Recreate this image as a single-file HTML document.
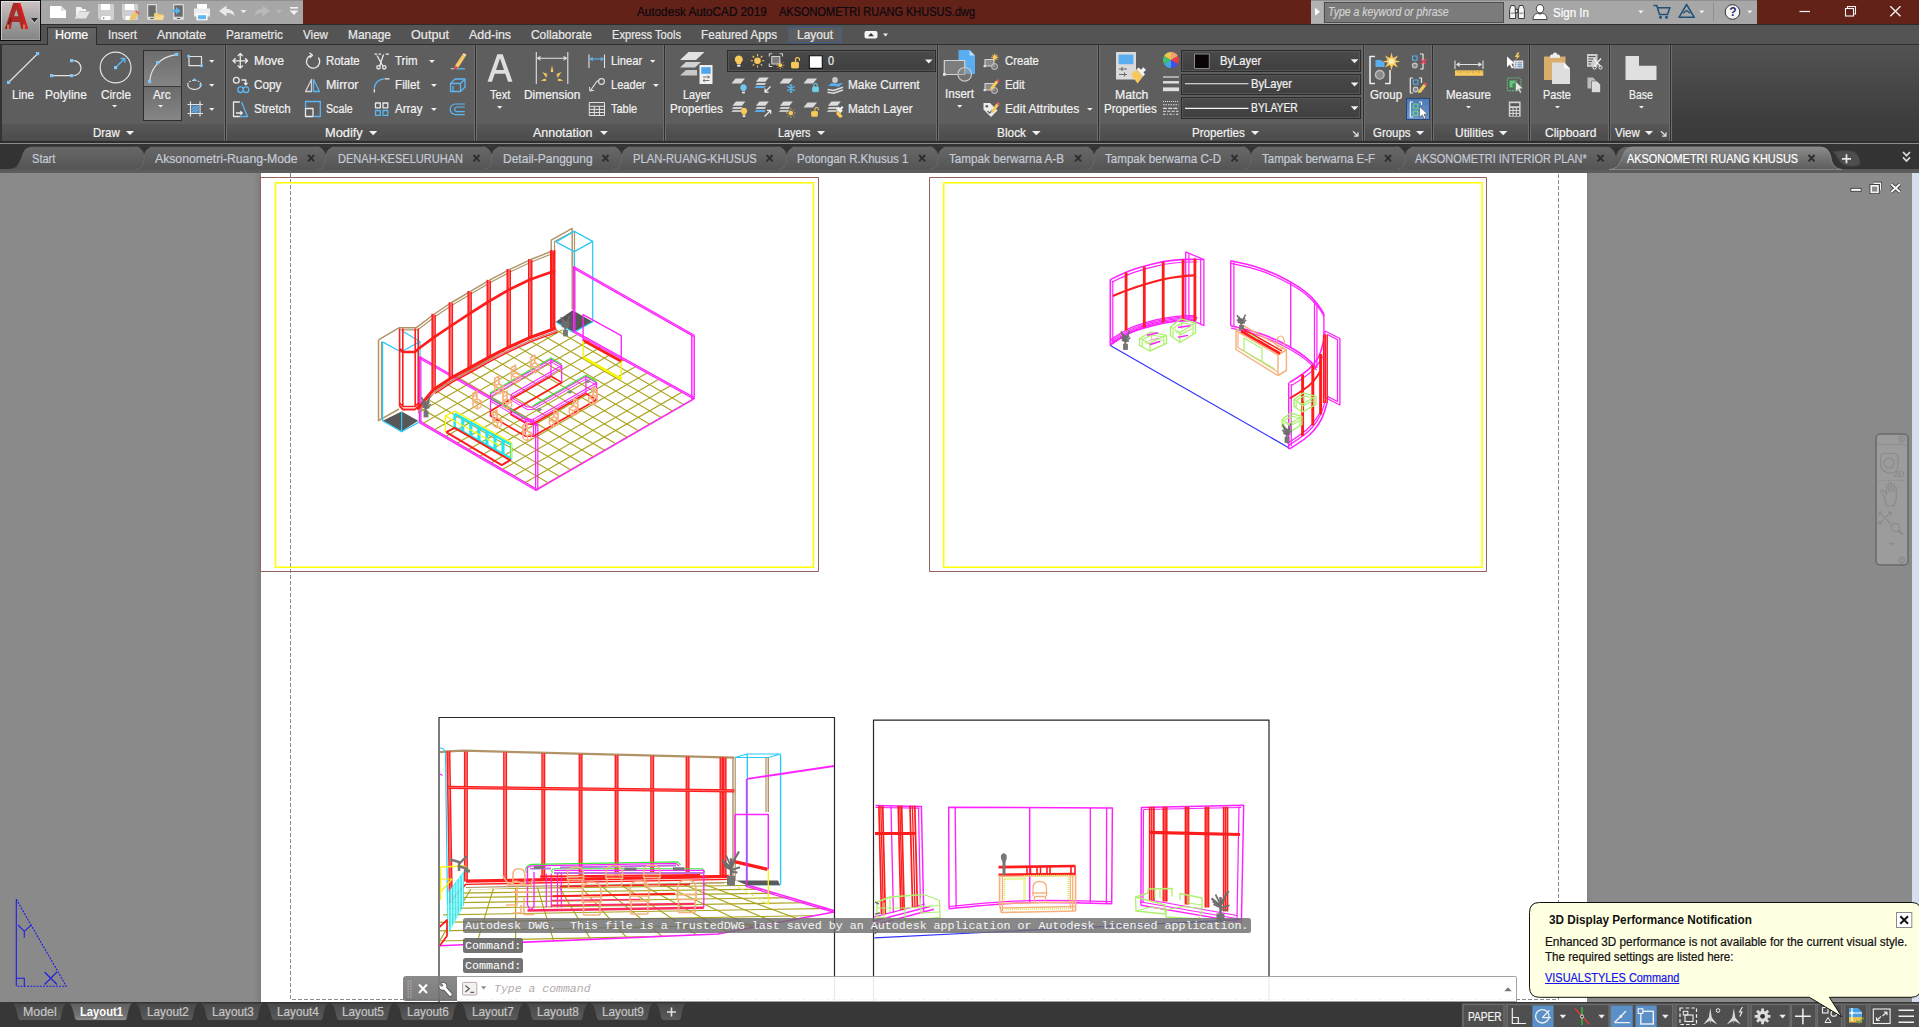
<!DOCTYPE html>
<html><head><meta charset="utf-8"><title>AutoCAD</title>
<style>
*{box-sizing:border-box;margin:0;padding:0}
html,body{width:1919px;height:1027px;overflow:hidden}
body{background:#8a8a8a;font-family:"Liberation Sans",sans-serif;font-size:12px;color:#f0f0f0;position:relative}
.a{position:absolute}
svg{position:absolute;overflow:visible}
.t{position:absolute;white-space:pre;-webkit-text-stroke:.22px currentColor;line-height:14px;font-size:12px;color:#f2f2f2;transform-origin:0 0}
.mt{position:absolute;white-space:nowrap;line-height:14px;font-size:12.5px;color:#e6e6e6;top:28px;transform-origin:0 0}
.pt{position:absolute;white-space:nowrap;line-height:14px;font-size:12.5px;color:#f2f2f2;top:126px;transform-origin:0 0}
.panel{position:absolute;top:46px;height:97px;background:#585858;border-left:1px solid #636363;border-right:1px solid #3e3e3e}
.ptitle{position:absolute;left:0;right:0;bottom:0;height:19px;background:linear-gradient(#4b4b4b,#454545)}
.dd{position:absolute;width:0;height:0;border-left:3.5px solid transparent;border-right:3.5px solid transparent;border-top:4px solid #f0f0f0}
.dds{position:absolute;width:0;height:0;border-left:3px solid transparent;border-right:3px solid transparent;border-top:3.5px solid #f0f0f0}
.ft{position:absolute;top:152px;white-space:nowrap;line-height:14px;font-size:12.5px;color:#c9c9c9;transform-origin:0 0}
.fx{position:absolute;top:152px;font-size:11px;line-height:14px;color:#2b2b2b;font-weight:bold}
.lt{position:absolute;top:1005px;white-space:nowrap;line-height:14px;font-size:12.5px;color:#c4c4c4;transform-origin:0 0}
.combo{position:absolute;background:linear-gradient(#4a4a4a,#3f3f3f);border:1px solid #2b2b2b;box-shadow:inset 0 0 0 1px #555}
.mono{font-family:"Liberation Mono",monospace}
</style></head><body>
<!-- TITLE BAR -->
<div class="a" style="left:0;top:0;width:1919px;height:24px;background:#622218"></div>
<div class="a" style="left:0;top:24px;width:1919px;height:1px;background:#2a2d2e"></div>
<!-- menu bar bg -->
<div class="a" style="left:0;top:25px;width:1919px;height:20px;background:#545454"></div>
<!-- ribbon bg -->
<div class="a" style="left:0;top:45px;width:1919px;height:100px;background:linear-gradient(#525252 0,#4a4a4a 30%,#3d3d3d 75%,#3a3a3a 100%)"></div>
<div class="a" style="left:0;top:44px;width:1919px;height:1px;background:#2f2f2f"></div>

<!-- QAT -->
<div class="a" style="left:41px;top:0;width:262px;height:24px;background:#a7a7a7;border-top:1px solid #8f8f8f"></div>
<!-- App button -->
<div class="a" style="left:0;top:0;width:41px;height:41px;background:linear-gradient(#c6c6c6 0,#c4baba 12%,#b8b2b2 25%,#a6a6a6 45%,#949494 70%,#858585 100%);border:1px solid #0e0e0e;box-shadow:inset 1px 1px 0 rgba(255,255,255,.5),inset -1px -1px 0 rgba(200,200,200,.35)"></div>
<svg style="left:0;top:0" width="41" height="41" viewBox="0 0 41 41">
 <path d="M4.9 29 L13.2 2.9 L20.2 2.9 L28.1 29 L21.3 29 L19.4 21.9 L12 21.9 L10.8 29 Z M14.1 16.3 L16.3 9.6 L18.4 16.3 Z" fill="#ab2c27" fill-rule="evenodd"/>
 <path d="M17.6 2.9 L20.2 2.9 L28.1 29 L26.2 29 L24.2 22 L19.2 7.5 Z" fill="#f2141c" opacity=".85"/>
 <path d="M5.6 28.5 L10.8 17.5 L11.8 18 L7.2 28.8 Z" fill="#5a1210" opacity=".8"/>
 <path d="M7 24.5 h2.2 v4.5 h-2.2 Z M23 24.5 h2.2 v4.5 h-2.2 Z" fill="#d98a5a" opacity=".8"/>
 <path d="M30.8 18 H38.1 L34.45 22.6 Z" fill="#2c2c2c"/><path d="M30.8 18.3 L34.45 23.2 L38.1 18.3" stroke="#e8e8e8" stroke-width=".7" fill="none" opacity=".7"/>
</svg>
<!-- QAT icons -->
<svg style="left:41px;top:0" width="262" height="24" viewBox="41 0 262 24">
 <!-- new -->
 <path d="M50 6 H61 L66 10.5 V18 H50 Z" fill="#fff"/><path d="M61 6 V10.5 H66 Z" fill="#d9d9d9"/>
 <!-- open -->
 <path d="M76 7 H81 L82.5 9 H86 V11 H79.5 L76 17 Z" fill="#f4f4f4"/><path d="M79 11.5 H90 L86 18.5 H74.5 Z" fill="#e4e4e0"/>
 <!-- save -->
 <path d="M98 4 H114 V20 H100 L98 18 Z" fill="#cfcfcf"/><rect x="101" y="4" width="9" height="6" fill="#fff"/><rect x="101.5" y="16" width="9" height="4" fill="#fff"/><rect x="103" y="17" width="1.3" height="2.2" fill="#9a9a9a"/>
 <!-- save as -->
 <path d="M122 4 H138 V20 H124 L122 18 Z" fill="#cfcfcf"/><rect x="125" y="4" width="9" height="6" fill="#fff"/><rect x="125.5" y="16" width="6" height="4" fill="#fff"/>
 <path d="M130 17 L135 11.5 L138.5 14.5 L133.5 20 L129.5 20.5 Z" fill="#e9c46a"/><path d="M135 11.5 L136.2 10.3 L139.7 13.3 L138.5 14.5 Z" fill="#ee5a5a"/>
 <!-- open from mobile -->
 <rect x="147" y="4" width="10" height="16" rx="1.2" fill="#d8d8d8"/><rect x="148.3" y="5.3" width="7.4" height="11.4" fill="#6b6b6b"/><rect x="150.5" y="18" width="3" height="1" fill="#555"/>
 <path d="M154 13 H158 L159 14.2 H163 V20 H154 Z" fill="#f0c870"/><path d="M155.5 15.5 H164.5 L163 20 H154 Z" fill="#f6d995"/>
 <!-- save to mobile -->
 <rect x="173" y="4" width="11" height="16" rx="1.2" fill="#d8d8d8"/><rect x="174.3" y="5.3" width="8.4" height="11.4" fill="#6b6b6b"/><rect x="177" y="18" width="3" height="1" fill="#555"/>
 <path d="M171.5 9.7 H176 V7 L180.5 10.8 L176 14.6 V11.9 H171.5 Z" fill="#5ab4f0"/>
 <!-- print -->
 <rect x="197" y="4" width="10" height="5" fill="#fff"/><path d="M194 8.5 H210 V16.5 H194 Z" fill="#ececec"/><rect x="196.5" y="14" width="11" height="6.3" fill="#fff"/><rect x="198" y="15.2" width="8" height="4" fill="#62b6f2"/><rect x="196" y="13.5" width="12" height="1.3" fill="#fff"/>
 <!-- undo -->
 <path d="M219 11 L226.5 5.5 V9 C231 9 234 11 234.5 16 C232.5 13.5 230 13 226.5 13 V16.5 Z" fill="#e9e9e9"/>
 <path d="M240.5 10 H246.5 L243.5 13.2 Z" fill="#e9e9e9"/>
 <!-- redo -->
 <path d="M270 11 L262.5 5.5 V9 C258 9 255 11 254.5 16 C256.5 13.5 259 13 262.5 13 V16.5 Z" fill="#b9b9b9"/>
 <path d="M276 10 H282 L279 13.2 Z" fill="#b9b9b9"/>
 <!-- customize -->
 <rect x="290" y="7" width="8" height="1.6" fill="#f2f2f2"/><path d="M289.6 10.5 H298.4 L294 15 Z" fill="#f2f2f2"/>
</svg>
<!-- title text -->
<div class="t" style="left:637.0px;top:4.4px;font-size:12.8px;line-height:15px;color:#0c0810;transform:scaleX(0.916);">Autodesk AutoCAD 2019</div>
<div class="t" style="left:779.3px;top:4.4px;font-size:12.8px;line-height:15px;color:#0c0810;transform:scaleX(0.859);">AKSONOMETRI RUANG KHUSUS.dwg</div>
<div class="a" style="left:0;top:45px;width:1671px;height:97px;background:#5e5e5e;border-left:2px solid #333"></div>
<div class="a" style="left:2px;top:124px;width:1669px;height:17.5px;background:linear-gradient(#575757,#4a4a4a)"></div>
<div class="a" style="left:2px;top:137.5px;width:1669px;height:1px;background:repeating-linear-gradient(90deg,#555 0,#555 1px,#4c4c4c 1px,#4c4c4c 2px)"></div>
<div class="a" style="left:224px;top:45px;width:3px;height:96.5px;background:linear-gradient(90deg,#6c6c6c 0,#6c6c6c 1px,#2f2f2f 1px,#2f2f2f 2px,#6c6c6c 2px)"></div>
<div class="a" style="left:474px;top:45px;width:3px;height:96.5px;background:linear-gradient(90deg,#6c6c6c 0,#6c6c6c 1px,#2f2f2f 1px,#2f2f2f 2px,#6c6c6c 2px)"></div>
<div class="a" style="left:663px;top:45px;width:3px;height:96.5px;background:linear-gradient(90deg,#6c6c6c 0,#6c6c6c 1px,#2f2f2f 1px,#2f2f2f 2px,#6c6c6c 2px)"></div>
<div class="a" style="left:936px;top:45px;width:3px;height:96.5px;background:linear-gradient(90deg,#6c6c6c 0,#6c6c6c 1px,#2f2f2f 1px,#2f2f2f 2px,#6c6c6c 2px)"></div>
<div class="a" style="left:1097px;top:45px;width:3px;height:96.5px;background:linear-gradient(90deg,#6c6c6c 0,#6c6c6c 1px,#2f2f2f 1px,#2f2f2f 2px,#6c6c6c 2px)"></div>
<div class="a" style="left:1362px;top:45px;width:3px;height:96.5px;background:linear-gradient(90deg,#6c6c6c 0,#6c6c6c 1px,#2f2f2f 1px,#2f2f2f 2px,#6c6c6c 2px)"></div>
<div class="a" style="left:1431px;top:45px;width:3px;height:96.5px;background:linear-gradient(90deg,#6c6c6c 0,#6c6c6c 1px,#2f2f2f 1px,#2f2f2f 2px,#6c6c6c 2px)"></div>
<div class="a" style="left:1528px;top:45px;width:3px;height:96.5px;background:linear-gradient(90deg,#6c6c6c 0,#6c6c6c 1px,#2f2f2f 1px,#2f2f2f 2px,#6c6c6c 2px)"></div>
<div class="a" style="left:1608px;top:45px;width:3px;height:96.5px;background:linear-gradient(90deg,#6c6c6c 0,#6c6c6c 1px,#2f2f2f 1px,#2f2f2f 2px,#6c6c6c 2px)"></div>
<div class="a" style="left:1669px;top:45px;width:3px;height:96.5px;background:linear-gradient(90deg,#6c6c6c 0,#6c6c6c 1px,#2f2f2f 1px,#2f2f2f 2px,#6c6c6c 2px)"></div>
<div class="a" style="left:0;top:141.3px;width:1919px;height:1.7px;background:#2d2d2d"></div>
<div class="a" style="left:0;top:143px;width:1919px;height:1.3px;background:#8c8c8c"></div>
<!-- Arc button highlight -->
<div class="a" style="left:142.5px;top:49.5px;width:39.5px;height:71px;background:linear-gradient(#6d6d6d 0,#848484 50%,#6b6b6b 52%,#868686 100%);border:1px solid #2e2e2e"></div>
<div class="a" style="left:143px;top:86px;width:38.5px;height:1px;background:#3a3a3a"></div>
<!-- combos -->
<div class="combo" style="left:727px;top:50px;width:208.5px;height:22px"></div>
<div class="combo" style="left:1181px;top:50px;width:179.5px;height:21.5px"></div>
<div class="combo" style="left:1181px;top:73.7px;width:179.5px;height:21.3px"></div>
<div class="combo" style="left:1181px;top:97.3px;width:179.5px;height:21.5px"></div>
<!-- group select highlight -->
<div class="a" style="left:1406.3px;top:98.3px;width:23.4px;height:21.4px;background:linear-gradient(#4f79b4,#6a95cf);border:1px solid #27477a"></div>
<div class="a" style="left:47px;top:27px;width:50px;height:18px;background:linear-gradient(#636363,#5e5e5e);border:1px solid #2d2d2d;border-bottom:none"></div>
<div class="a" style="left:48px;top:43.5px;width:48px;height:2.5px;background:#5e5e5e"></div>
<div class="a" style="left:788px;top:27px;width:54px;height:16px;background:#5d5d5d;border:1px solid #3b5f8a"></div>
<div class="t" style="left:55.0px;top:26.7px;font-size:13px;line-height:15px;color:#ffffff;transform:scaleX(0.960);">Home</div>
<div class="t" style="left:108.0px;top:26.7px;font-size:13px;line-height:15px;color:#e8e8e8;transform:scaleX(0.892);">Insert</div>
<div class="t" style="left:157.0px;top:26.7px;font-size:13px;line-height:15px;color:#e8e8e8;transform:scaleX(0.941);">Annotate</div>
<div class="t" style="left:226.0px;top:26.7px;font-size:13px;line-height:15px;color:#e8e8e8;transform:scaleX(0.907);">Parametric</div>
<div class="t" style="left:303.0px;top:26.7px;font-size:13px;line-height:15px;color:#e8e8e8;transform:scaleX(0.895);">View</div>
<div class="t" style="left:348.0px;top:26.7px;font-size:13px;line-height:15px;color:#e8e8e8;transform:scaleX(0.915);">Manage</div>
<div class="t" style="left:411.0px;top:26.7px;font-size:13px;line-height:15px;color:#e8e8e8;transform:scaleX(0.974);">Output</div>
<div class="t" style="left:469.0px;top:26.7px;font-size:13px;line-height:15px;color:#e8e8e8;transform:scaleX(0.953);">Add-ins</div>
<div class="t" style="left:531.0px;top:26.7px;font-size:13px;line-height:15px;color:#e8e8e8;transform:scaleX(0.917);">Collaborate</div>
<div class="t" style="left:612.0px;top:26.7px;font-size:13px;line-height:15px;color:#e8e8e8;transform:scaleX(0.855);">Express Tools</div>
<div class="t" style="left:701.0px;top:26.7px;font-size:13px;line-height:15px;color:#e8e8e8;transform:scaleX(0.899);">Featured Apps</div>
<div class="t" style="left:797.0px;top:26.7px;font-size:13px;line-height:15px;color:#e8e8e8;transform:scaleX(0.922);">Layout</div>
<svg style="left:864px;top:29px" width="26" height="12" viewBox="864 29 26 12"><rect x="864.5" y="31" width="13" height="7.5" rx="2" fill="#f4f4f4"/><path d="M868 36.3 L871 33 L874 36.3 Z" fill="#333"/><path d="M883 33.5 H888 L885.5 36.5 Z" fill="#f0f0f0"/></svg>
<div class="t" style="left:93.3px;top:124.5px;font-size:13px;line-height:15px;color:#f2f2f2;transform:scaleX(0.883);">Draw</div>
<svg style="left:125.95px;top:131.0px" width="8.10" height="4.05" viewBox="0 0 8.10 4.05"><path d="M0 0 H8.10 L4.05 4.05 Z" fill="#f0f0f0"/></svg>
<div class="t" style="left:325.3px;top:124.5px;font-size:13px;line-height:15px;color:#f2f2f2;transform:scaleX(0.985);">Modify</div>
<svg style="left:368.84px;top:131.0px" width="8.32" height="4.16" viewBox="0 0 8.32 4.16"><path d="M0 0 H8.32 L4.16 4.16 Z" fill="#f0f0f0"/></svg>
<div class="t" style="left:533.3px;top:124.5px;font-size:13px;line-height:15px;color:#f2f2f2;transform:scaleX(0.957);">Annotation</div>
<svg style="left:599.56px;top:131.0px" width="7.88" height="3.94" viewBox="0 0 7.88 3.94"><path d="M0 0 H7.88 L3.94 3.94 Z" fill="#f0f0f0"/></svg>
<div class="t" style="left:778.3px;top:124.5px;font-size:13px;line-height:15px;color:#f2f2f2;transform:scaleX(0.833);">Layers</div>
<svg style="left:816.95px;top:131.0px" width="8.10" height="4.05" viewBox="0 0 8.10 4.05"><path d="M0 0 H8.10 L4.05 4.05 Z" fill="#f0f0f0"/></svg>
<div class="t" style="left:997.2px;top:124.5px;font-size:13px;line-height:15px;color:#f2f2f2;transform:scaleX(0.912);">Block</div>
<svg style="left:1031.68px;top:131.0px" width="8.64" height="4.32" viewBox="0 0 8.64 4.32"><path d="M0 0 H8.64 L4.32 4.32 Z" fill="#f0f0f0"/></svg>
<div class="t" style="left:1192.2px;top:124.5px;font-size:13px;line-height:15px;color:#f2f2f2;transform:scaleX(0.891);">Properties</div>
<svg style="left:1250.95px;top:131.0px" width="8.10" height="4.05" viewBox="0 0 8.10 4.05"><path d="M0 0 H8.10 L4.05 4.05 Z" fill="#f0f0f0"/></svg>
<div class="t" style="left:1372.5px;top:124.5px;font-size:13px;line-height:15px;color:#f2f2f2;transform:scaleX(0.880);">Groups</div>
<svg style="left:1415.90px;top:131.0px" width="8.21" height="4.10" viewBox="0 0 8.21 4.10"><path d="M0 0 H8.21 L4.10 4.10 Z" fill="#f0f0f0"/></svg>
<div class="t" style="left:1454.5px;top:124.5px;font-size:13px;line-height:15px;color:#f2f2f2;transform:scaleX(0.919);">Utilities</div>
<svg style="left:1498.79px;top:131.0px" width="8.42" height="4.21" viewBox="0 0 8.42 4.21"><path d="M0 0 H8.42 L4.21 4.21 Z" fill="#f0f0f0"/></svg>
<div class="t" style="left:1544.5px;top:124.5px;font-size:13px;line-height:15px;color:#f2f2f2;transform:scaleX(0.922);">Clipboard</div>
<div class="t" style="left:1615.0px;top:124.5px;font-size:13px;line-height:15px;color:#f2f2f2;transform:scaleX(0.884);">View</div>
<svg style="left:1645.45px;top:131.0px" width="8.10" height="4.05" viewBox="0 0 8.10 4.05"><path d="M0 0 H8.10 L4.05 4.05 Z" fill="#f0f0f0"/></svg>
<div class="t" style="left:12.2px;top:86.8px;font-size:13px;line-height:15px;color:#f2f2f2;transform:scaleX(0.899);">Line</div>
<div class="t" style="left:45.2px;top:86.8px;font-size:13px;line-height:15px;color:#f2f2f2;transform:scaleX(0.920);">Polyline</div>
<div class="t" style="left:101.3px;top:86.8px;font-size:13px;line-height:15px;color:#f2f2f2;transform:scaleX(0.900);">Circle</div>
<div class="t" style="left:153.3px;top:86.8px;font-size:13px;line-height:15px;color:#f2f2f2;transform:scaleX(0.903);">Arc</div>
<div class="t" style="left:254.2px;top:53.0px;font-size:13px;line-height:15px;color:#f2f2f2;transform:scaleX(0.944);">Move</div>
<div class="t" style="left:254.2px;top:77.0px;font-size:13px;line-height:15px;color:#f2f2f2;transform:scaleX(0.906);">Copy</div>
<div class="t" style="left:254.2px;top:101.0px;font-size:13px;line-height:15px;color:#f2f2f2;transform:scaleX(0.889);">Stretch</div>
<div class="t" style="left:326.3px;top:53.0px;font-size:13px;line-height:15px;color:#f2f2f2;transform:scaleX(0.880);">Rotate</div>
<div class="t" style="left:326.3px;top:77.0px;font-size:13px;line-height:15px;color:#f2f2f2;transform:scaleX(0.958);">Mirror</div>
<div class="t" style="left:326.3px;top:101.0px;font-size:13px;line-height:15px;color:#f2f2f2;transform:scaleX(0.821);">Scale</div>
<div class="t" style="left:395.0px;top:53.0px;font-size:13px;line-height:15px;color:#f2f2f2;transform:scaleX(0.882);">Trim</div>
<div class="t" style="left:395.0px;top:77.0px;font-size:13px;line-height:15px;color:#f2f2f2;transform:scaleX(0.900);">Fillet</div>
<div class="t" style="left:395.0px;top:101.0px;font-size:13px;line-height:15px;color:#f2f2f2;transform:scaleX(0.885);">Array</div>
<div class="t" style="left:489.7px;top:86.8px;font-size:13px;line-height:15px;color:#f2f2f2;transform:scaleX(0.851);">Text</div>
<div class="t" style="left:524.2px;top:86.8px;font-size:13px;line-height:15px;color:#f2f2f2;transform:scaleX(0.917);">Dimension</div>
<div class="t" style="left:610.5px;top:53.0px;font-size:13px;line-height:15px;color:#f2f2f2;transform:scaleX(0.863);">Linear</div>
<div class="t" style="left:610.5px;top:77.0px;font-size:13px;line-height:15px;color:#f2f2f2;transform:scaleX(0.852);">Leader</div>
<div class="t" style="left:610.5px;top:101.0px;font-size:13px;line-height:15px;color:#f2f2f2;transform:scaleX(0.843);">Table</div>
<div class="t" style="left:683.3px;top:86.8px;font-size:13px;line-height:15px;color:#f2f2f2;transform:scaleX(0.846);">Layer</div>
<div class="t" style="left:670.3px;top:101.3px;font-size:13px;line-height:15px;color:#f2f2f2;transform:scaleX(0.889);">Properties</div>
<div class="t" style="left:848.3px;top:77.0px;font-size:13px;line-height:15px;color:#f2f2f2;transform:scaleX(0.910);">Make Current</div>
<div class="t" style="left:848.3px;top:101.0px;font-size:13px;line-height:15px;color:#f2f2f2;transform:scaleX(0.904);">Match Layer</div>
<div class="t" style="left:945.3px;top:86.0px;font-size:13px;line-height:15px;color:#f2f2f2;transform:scaleX(0.889);">Insert</div>
<div class="t" style="left:1004.5px;top:53.0px;font-size:13px;line-height:15px;color:#f2f2f2;transform:scaleX(0.866);">Create</div>
<div class="t" style="left:1004.5px;top:77.0px;font-size:13px;line-height:15px;color:#f2f2f2;transform:scaleX(0.879);">Edit</div>
<div class="t" style="left:1004.5px;top:101.0px;font-size:13px;line-height:15px;color:#f2f2f2;transform:scaleX(0.926);">Edit Attributes</div>
<div class="t" style="left:1114.5px;top:86.8px;font-size:13px;line-height:15px;color:#f2f2f2;transform:scaleX(0.941);">Match</div>
<div class="t" style="left:1104.2px;top:101.3px;font-size:13px;line-height:15px;color:#f2f2f2;transform:scaleX(0.891);">Properties</div>
<div class="t" style="left:1369.5px;top:86.8px;font-size:13px;line-height:15px;color:#f2f2f2;transform:scaleX(0.891);">Group</div>
<div class="t" style="left:1446.3px;top:86.8px;font-size:13px;line-height:15px;color:#f2f2f2;transform:scaleX(0.888);">Measure</div>
<div class="t" style="left:1543.3px;top:86.8px;font-size:13px;line-height:15px;color:#f2f2f2;transform:scaleX(0.839);">Paste</div>
<div class="t" style="left:1629.2px;top:86.8px;font-size:13px;line-height:15px;color:#f2f2f2;transform:scaleX(0.803);">Base</div>
<div class="t" style="left:828.0px;top:52.7px;font-size:13px;line-height:15px;color:#f2f2f2;transform:scaleX(0.830);">0</div>
<div class="t" style="left:1220.0px;top:53.0px;font-size:13px;line-height:15px;color:#f2f2f2;transform:scaleX(0.864);">ByLayer</div>
<div class="t" style="left:1251.2px;top:76.3px;font-size:13px;line-height:15px;color:#f2f2f2;transform:scaleX(0.860);">ByLayer</div>
<div class="t" style="left:1251.2px;top:100.0px;font-size:13px;line-height:15px;color:#f2f2f2;transform:scaleX(0.793);">BYLAYER</div>
<svg style="left:428.58px;top:60.0px" width="5.83" height="2.92" viewBox="0 0 5.83 2.92"><path d="M0 0 H5.83 L2.92 2.92 Z" fill="#f0f0f0"/></svg>
<svg style="left:430.58px;top:84.0px" width="5.83" height="2.92" viewBox="0 0 5.83 2.92"><path d="M0 0 H5.83 L2.92 2.92 Z" fill="#f0f0f0"/></svg>
<svg style="left:430.58px;top:108.0px" width="5.83" height="2.92" viewBox="0 0 5.83 2.92"><path d="M0 0 H5.83 L2.92 2.92 Z" fill="#f0f0f0"/></svg>
<svg style="left:649.80px;top:60.0px" width="5.40" height="2.70" viewBox="0 0 5.40 2.70"><path d="M0 0 H5.40 L2.70 2.70 Z" fill="#f0f0f0"/></svg>
<svg style="left:652.53px;top:84.0px" width="5.94" height="2.97" viewBox="0 0 5.94 2.97"><path d="M0 0 H5.94 L2.97 2.97 Z" fill="#f0f0f0"/></svg>
<svg style="left:1086.64px;top:108.0px" width="5.72" height="2.86" viewBox="0 0 5.72 2.86"><path d="M0 0 H5.72 L2.86 2.86 Z" fill="#f0f0f0"/></svg>
<svg style="left:496.80px;top:105.5px" width="5.40" height="2.70" viewBox="0 0 5.40 2.70"><path d="M0 0 H5.40 L2.70 2.70 Z" fill="#f0f0f0"/></svg>
<svg style="left:956.80px;top:104.5px" width="5.40" height="2.70" viewBox="0 0 5.40 2.70"><path d="M0 0 H5.40 L2.70 2.70 Z" fill="#f0f0f0"/></svg>
<svg style="left:1466.02px;top:105.5px" width="4.97" height="2.48" viewBox="0 0 4.97 2.48"><path d="M0 0 H4.97 L2.48 2.48 Z" fill="#f0f0f0"/></svg>
<svg style="left:1555.02px;top:105.5px" width="4.97" height="2.48" viewBox="0 0 4.97 2.48"><path d="M0 0 H4.97 L2.48 2.48 Z" fill="#f0f0f0"/></svg>
<svg style="left:1638.52px;top:105.5px" width="4.97" height="2.48" viewBox="0 0 4.97 2.48"><path d="M0 0 H4.97 L2.48 2.48 Z" fill="#f0f0f0"/></svg>
<svg style="left:112.41px;top:105.0px" width="5.18" height="2.59" viewBox="0 0 5.18 2.59"><path d="M0 0 H5.18 L2.59 2.59 Z" fill="#f0f0f0"/></svg>
<svg style="left:158.41px;top:105.0px" width="5.18" height="2.59" viewBox="0 0 5.18 2.59"><path d="M0 0 H5.18 L2.59 2.59 Z" fill="#f0f0f0"/></svg>
<svg style="left:209.30px;top:60.0px" width="5.40" height="2.70" viewBox="0 0 5.40 2.70"><path d="M0 0 H5.40 L2.70 2.70 Z" fill="#f0f0f0"/></svg>
<svg style="left:209.30px;top:84.0px" width="5.40" height="2.70" viewBox="0 0 5.40 2.70"><path d="M0 0 H5.40 L2.70 2.70 Z" fill="#f0f0f0"/></svg>
<svg style="left:209.30px;top:108.0px" width="5.40" height="2.70" viewBox="0 0 5.40 2.70"><path d="M0 0 H5.40 L2.70 2.70 Z" fill="#f0f0f0"/></svg>
<svg style="left:0;top:45px" width="1919" height="100" viewBox="0 45 1919 100" fill="none" stroke-linejoin="round">
<!-- ===== DRAW ===== -->
<g stroke="#e2e2e2" stroke-width="1.2">
 <path d="M9 82 L37.3 54"/>
 <path d="M53 75.6 H71 M73.5 75.6 A7.5 7.5 0 0 0 73.5 60.6"/>
 <circle cx="115.6" cy="67.5" r="15.4"/>
 <path d="M149.8 80.5 C151 68 160 57 175 54.8"/>
 <rect x="189" y="56.5" width="12.5" height="9.2"/>
 <path d="M187.8 84.2 A6.6 4.6 0 0 0 200.9 85.4"/>
 <path d="M187.5 104.5 H203 M187.5 113.5 H203 M190.5 101.5 V116.5 M200 101.5 V116.5"/>
</g>
<g fill="#7cc6fc">
 <rect x="7" y="80.8" width="3.2" height="3.2"/><rect x="36" y="52" width="3.2" height="3.2"/>
 <rect x="50" y="74" width="3.2" height="3.2"/><rect x="70" y="74" width="3.2" height="3.2"/><rect x="70" y="59" width="3.2" height="3.2"/>
 <rect x="114" y="66" width="3.2" height="3.2"/>
 <rect x="148" y="80" width="3.2" height="3.2"/><rect x="156" y="61" width="3.2" height="3.2"/><rect x="175" y="52.8" width="3.2" height="3.2"/>
 <rect x="187.2" y="54.8" width="2.6" height="2.6"/><rect x="200.2" y="64.5" width="2.6" height="2.6"/>
 <rect x="193.2" y="78.7" width="2.4" height="2.4"/><rect x="199.5" y="83.8" width="2.4" height="2.4"/>
 <rect x="191.2" y="105.2" width="8.2" height="7.7" fill="#4a86b8"/>
</g>
<path d="M117 66 L124 59.2 M120.5 58.5 H124.8 V62.8" stroke="#5cb6f4" stroke-width="1.4"/>
<path d="M187.8 84.2 A6.6 4.6 0 0 1 200.9 85.4" stroke="#e2e2e2" stroke-width="1.1" stroke-dasharray="1.6 1.3"/>
<path d="M192 112.5 L198.5 106 M192 109.5 L195.5 106 M195 112.5 L198.8 108.8" stroke="#9fd2f8" stroke-width=".8"/>
<!-- ===== MODIFY ===== -->
<g stroke="#eaeaea" stroke-width="1.3">
 <path d="M233 60.8 H247.6 M240.3 53.5 V68.1 M235.6 58.2 L233 60.8 L235.6 63.4 M245 58.2 L247.6 60.8 L245 63.4 M237.7 56.1 L240.3 53.5 L242.9 56.1 M237.7 65.5 L240.3 68.1 L242.9 65.5"/>
 <circle cx="236.3" cy="80.3" r="2.9"/><path d="M241.5 80 H245.8 V84.5 M244.2 83 L245.8 84.8 L247.4 83"/>
 <path d="M239.8 102 H233.5 V116.5 H239.8 M236 113 H242 M240.3 111.3 L242.3 113 L240.3 114.7"/>
 <path d="M318.3 57.5 A6.6 6.6 0 1 1 311 55.3 M309.5 52.8 L312.5 55.2 L309.8 57.8"/>
 <path d="M311.5 79.5 V91.5 H305.5 Z" stroke="#d8d0d0"/>
 <rect x="305.5" y="108.5" width="7.5" height="8"/>
 <path d="M374.5 54.2 H377 M378.5 54.2 H381 M385.5 54.2 H389"/>
 <path d="M377 55.5 L382.8 66 M383.5 54.5 L379.7 66"/><circle cx="384.3" cy="67.3" r="1.7"/><circle cx="378.5" cy="67.3" r="1.7"/>
 <path d="M384.8 78.8 H389.5 M374.3 89 V92.5"/>
 <rect x="375.5" y="103" width="4.8" height="4.8"/><rect x="383" y="103" width="4.8" height="4.8"/>
</g>
<g stroke="#5cb6f4" stroke-width="1.3">
 <circle cx="240.6" cy="89.7" r="2.8"/><circle cx="246" cy="89.7" r="2.8"/>
 <path d="M241.5 102 L247.5 116.5 H240"/>
 <path d="M313.5 79.5 V91.5 H319.5 Z"/>
 <path d="M305.5 108 V101.5 H320.3 V116.5 H313.5"/>
 <path d="M374.3 88.5 C374.5 83 378.5 79 384.5 78.8"/>
 <rect x="375.5" y="110.5" width="4.8" height="4.8"/><rect x="383" y="110.5" width="4.8" height="4.8"/>
 <path d="M450.5 83.5 H460.5 V91.5 H450.5 Z M450.5 83.5 L455 79 H465 V87 L460.5 91.5 M460.5 83.5 L465 79 M453 86 V91.5"/>
 <path d="M464.8 104 H455.5 A5.3 5.3 0 0 0 455.5 114.6 H464.8 M464.8 107 H456.5 A2.4 2.4 0 0 0 456.5 111.7 H464.8" stroke-width="1.2"/>
 <path d="M456.5 68.8 H465"/>
</g>
<path d="M455 65.8 L462.2 54.8 L465.3 56.8 L458.2 67.8 Z" fill="#f6c86a"/><path d="M455 65.8 L458.2 67.8 L456.5 68.9 L453 68.5 Z" fill="#f05050"/><path d="M462.2 54.8 L463.8 53 L466.5 54.8 L465.3 56.8Z" fill="#f9dc9a"/>
<path d="M450.8 68.8 H454" stroke="#ddd" stroke-width="1"/>
<!-- ===== ANNOTATION ===== -->
<path d="M487.5 81.7 L497.3 54.2 H502.7 L512.5 81.7 H508 L505.3 73.7 H494.7 L492 81.7 Z M496 70 H504 L500 58.3 Z" fill="#dedede" fill-rule="evenodd"/>
<g stroke="#e2e2e2" stroke-width="1.1">
 <path d="M536.3 52 V84 M567.8 52 V84 M538 58.3 H566 M540.5 56.5 L537.5 58.3 L540.5 60.1 M563.5 56.5 L566.5 58.3 L563.5 60.1"/>
 <path d="M589 54.5 V68 M604.5 54.5 V68"/>
 <path d="M590.5 90.5 L596 82.5 Q597 81 598.5 80.5 M589.5 87 L590 91 L594 90.3"/><circle cx="601.5" cy="81.5" r="2.9"/>
 <path d="M589.3 102.5 H604.5 V115.5 H589.3 Z M589.3 106.3 H604.5 M589.3 109.4 H604.5 M589.3 112.5 H604.5 M594.3 106.3 V115.5 M599.4 106.3 V115.5" stroke-width="1"/>
</g>
<path d="M590.5 59 H603 M592.8 57.5 L590.3 59 L592.8 60.5 M600.7 57.5 L603.2 59 L600.7 60.5" stroke="#5cb6f4" stroke-width="1.2"/>
<g fill="#f6cb5e"><path d="M551.3 68.5 L552 62.5 L552.8 68.5 Z" transform="translate(0,3)"/><path d="M545 74.5 L541.5 71 L547 73Z" transform="translate(.5,1)"/><path d="M558.5 74.5 L562.5 71 L556.7 73Z" transform="translate(-.5,1)"/><path d="M541 80 L545.5 78.3 L545.8 80.3Z" transform="translate(0,.3)"/><path d="M563 80 L558.5 78.3 L558.2 80.3Z" transform="translate(0,.3)"/>
 <path d="M550.6 72 L552 66 L553.4 72Z"/><path d="M543.3 73.2 L547.5 76 L546 77.5Z"/><path d="M560.7 73.2 L556.5 76 L558 77.5Z"/><path d="M540.3 80.8 L546 79 L546.3 81Z"/><path d="M563.7 80.8 L558 79 L557.7 81Z"/></g>
</svg>
<svg style="left:0;top:45px" width="1919" height="100" viewBox="0 45 1919 100" fill="none" stroke-linejoin="round">
<defs>
 <g id="sheet"><path d="M0 5 L4 0 H13.5 L9.5 5 Z" fill="#d9d9d9"/></g>
 <g id="sheets3"><path d="M0 4.2 L3.4 0 H12.8 L9.4 4.2 Z" fill="#dcdcdc"/><path d="M-.6 7.4 L1 5.4 H10.2 L8.6 7.4 Z" fill="#cfcfcf"/><path d="M-1.2 10.4 L.4 8.5 H9.6 L8 10.4 Z" fill="#c4c4c4"/></g>
 <g id="bulb"><path d="M0 -4.6 a4 4 0 0 1 2.2 7.3 v1.2 h-4.4 v-1.2 a4 4 0 0 1 2.2 -7.3Z"/><rect x="-1.6" y="4.6" width="3.2" height="2" fill="#f2f2f2"/></g>
 <g id="sun"><circle r="3.3"/><path d="M0 -6.8 V-4.6 M0 6.8 V4.6 M-6.8 0 H-4.6 M6.8 0 H4.6 M-4.8 -4.8 L-3.3 -3.3 M4.8 4.8 L3.3 3.3 M-4.8 4.8 L-3.3 3.3 M4.8 -4.8 L3.3 -3.3" stroke="#f7c95c" stroke-width="1.1"/></g>
 <g id="lock"><rect x="-3.4" y="0" width="6.8" height="5.6" rx=".6"/><path d="M-2 0 V-2.2 A2 2 0 0 1 2 -2.2 V0" fill="none" stroke-width="1.2"/></g>
 <g id="ulock"><rect x="-3.4" y="0" width="6.8" height="5.6" rx=".6"/><path d="M.5 0 V-2.6 A2 2 0 0 1 4.5 -2.6 V-1.5" fill="none" stroke-width="1.2"/></g>
</defs>
<!-- ===== LAYERS ===== -->
<g transform="translate(683,52)"><path d="M-3 8 L5.5 0 H21.5 L13 8 Z" fill="#e2e2e2"/><path d="M-3 15.5 L3 10 H18 L12 15.5 Z" fill="#d2d2d2"/><path d="M-3 23.5 L3 18 H14 V23.5 Z" fill="#c8c8c8"/>
 <rect x="16.5" y="13" width="13" height="19" fill="#f0f0f0"/><rect x="18.3" y="15.2" width="9.4" height="6.6" fill="#4fa6ec"/><path d="M20 25 H26.5 M24.8 23.6 L26.5 25 L24.8 26.4 M26.5 28.5 H20 M21.7 27.1 L20 28.5 L21.7 29.9" stroke="#666" stroke-width=".9"/></g>
<!-- combo contents -->
<g transform="translate(738.8,60)" fill="#f7c95c"><use href="#bulb"/></g>
<g transform="translate(757.5,60.8)" fill="#f7c95c"><use href="#sun"/></g>
<g stroke="#d0d0d0" stroke-width="1.1"><path d="M769.3 56.5 V53.8 H772.3 M779.5 53.8 H782.5 V56.5 M769.3 63.5 V66.5 H772.3"/><rect x="771.8" y="56.5" width="8" height="7.5" fill="#7a7a7a"/></g>
<g transform="translate(780.3,65.2) scale(.62)" fill="#f7c95c"><use href="#sun"/></g>
<g transform="translate(795,62.3)" fill="#f7c95c" stroke="#f7c95c"><use href="#ulock"/></g>
<rect x="809.3" y="55.8" width="13" height="12.6" fill="#fff" stroke="#111" stroke-width="1.1"/>
<path d="M925 59.5 H932.6 L928.8 63.6 Z" fill="#f0f0f0"/>
<!-- row 2 -->
<g transform="translate(731.5,78.5)"><use href="#sheet"/></g><g transform="translate(743.5,88)" fill="#6ec8f0"><use href="#bulb" transform="scale(.82)"/></g>
<g transform="translate(756,77.5)"><use href="#sheets3"/><path d="M-1.2 10.4 L.4 8.5 H9.6 L8 10.4 Z" fill="#58aef0"/></g><path d="M770.5 86.5 L765 92 M765 88.5 V92.2 H768.6" stroke="#eee" stroke-width="1.2"/>
<g transform="translate(779.5,78.5)"><use href="#sheet"/></g><g transform="translate(791,88.5)" stroke="#58b8f0" stroke-width="1.1"><path d="M0 -4.5 V4.5 M-3.9 -2.2 L3.9 2.2 M-3.9 2.2 L3.9 -2.2 M-1.4 -3.6 L0 -2.4 L1.4 -3.6 M-1.4 3.6 L0 2.4 L1.4 3.6"/></g>
<g transform="translate(803.5,78.5)"><use href="#sheet"/></g><g transform="translate(815.5,87)" fill="#6ed0e8" stroke="#6ed0e8"><use href="#lock" transform="scale(.85)"/></g>
<g transform="translate(828,83)"><path d="M0 3 L3.5 0 L9 .8 L15 0 L11 3.8 L5.5 3 Z" fill="#58aef0"/><path d="M-.5 6.5 L5.5 7.5 L15 4.2 M-.5 9.3 L5.5 10.3 L15 7" stroke="#ddd" stroke-width="1.5"/><circle cx="7" cy="-3" r="2.9" fill="#c8c8c8"/></g>
<!-- row 3 -->
<g transform="translate(732.5,101.5)"><use href="#sheets3"/></g><g transform="translate(744,111.5)" fill="#f7c95c"><use href="#bulb" transform="scale(.82)"/></g>
<g transform="translate(756,101.5)"><use href="#sheets3"/><path d="M-1.2 10.4 L.4 8.5 H9.6 L8 10.4 Z" fill="#58aef0"/></g><path d="M764.5 116.5 L770.5 110.5 M767 110.3 H770.7 V114" stroke="#eee" stroke-width="1.2"/>
<g transform="translate(780,101.5)"><use href="#sheets3"/></g><g transform="translate(790.8,113) scale(.7)" fill="#f7c95c"><use href="#sun"/></g>
<g transform="translate(803.5,102.5)"><use href="#sheet"/></g><g transform="translate(814.5,111.5)" fill="#f7c95c" stroke="#f7c95c"><use href="#ulock" transform="scale(.85)"/></g>
<g transform="translate(828,101.5)"><use href="#sheets3"/></g><path d="M836 109 L838.5 106.5 L840 108 L842 106 L843.5 107.5 L841.5 109.5 L842.8 110.8 L840.3 113.3 Z" fill="#f2f2f2"/><path d="M837 110 L840.3 113.3 L842.8 116.6 L840 118 L836.3 114.3 Z" fill="#f7c95c"/>
<!-- ===== BLOCK ===== -->
<path d="M958.5 50 H969.5 L975 55.5 V74 H958.5 Z" fill="#58aef0"/><path d="M969.5 50 V55.5 H975 Z" fill="#b8dcfa"/>
<rect x="944.3" y="60.5" width="20.5" height="14" fill="#7d7d7d" stroke="#d4d4d4" stroke-width="1.2"/><rect x="943" y="73" width="2.8" height="2.8" fill="#e4e4e4"/>
<circle cx="964.7" cy="74.3" r="6.8" fill="rgba(140,140,140,.45)" stroke="#c8c8c8" stroke-width="1.2"/>
<g id="blk"><rect x="985" y="59.5" width="9" height="6.5" fill="#8a8a8a" stroke="#d6d6d6" stroke-width="1.1"/><rect x="983.6" y="65" width="2.2" height="2.2" fill="#e4e4e4"/><circle cx="994.5" cy="66.5" r="3" fill="rgba(140,140,140,.6)" stroke="#c8c8c8" stroke-width="1"/></g>
<g transform="translate(994.8,57.2) scale(.55)" fill="#f7c95c"><use href="#sun"/><path d="M0 -7 L1.2 -2.8 L5 -5 L2.8 -1.2 L7 0 L2.8 1.2 L5 5 L1.2 2.8 L0 7 L-1.2 2.8 L-5 5 L-2.8 1.2 L-7 0 L-2.8 -1.2 L-5 -5 L-1.2 -2.8 Z"/></g>
<use href="#blk" y="24"/><path d="M990.5 87.5 L996 80.5 L998.3 82.3 L992.8 89.3 L990 90.2 Z" fill="#f7c95c"/><path d="M996 80.5 L997.2 79 L999.5 80.8 L998.3 82.3 Z" fill="#f05858"/>
<path d="M983.5 103 H990 L997.5 110.5 L991 117 L983.5 109.5 Z" fill="#ececec"/><circle cx="986.8" cy="106.3" r="1.3" fill="#585858"/><path d="M987.5 111 L989.7 113.2 L992.5 109.5" stroke="#585858" stroke-width="1.1"/>
<path d="M991.5 110.5 L996.5 103.5 L998.8 105.3 L993.8 112.3 L991 113.2 Z" fill="#f7c95c"/><path d="M996.5 103.5 L997.7 102 L1000 103.8 L998.8 105.3 Z" fill="#f05858"/>
<!-- ===== PROPERTIES ===== -->
<rect x="1116" y="52" width="20" height="27.5" fill="#dadada"/><rect x="1118.6" y="54.6" width="14.8" height="9.6" fill="#58aef0"/>
<path d="M1119 69 H1127 M1122 67 V71 M1119 74.5 H1127 M1124.5 72.5 V76.5" stroke="#6a6a6a" stroke-width="1.1"/>
<path d="M1131 74.5 L1136.5 69.5 L1143 76.5 L1137.5 83.5 Z" fill="#f7c95c"/><path d="M1136.5 69.5 L1138.5 67.5 L1141 69.8 L1143.3 67.3 L1146 70 L1143.5 72.3 L1145 74.5 L1143 76.5 Z" fill="#f4f4f4"/>
<g transform="translate(1171,60)"><path d="M0 0 L0 -8 A8 8 0 0 1 6.9 -4 Z" fill="#f0a070"/><path d="M0 0 L6.9 -4 A8 8 0 0 1 6.9 4 Z" fill="#e84040"/><path d="M0 0 L6.9 4 A8 8 0 0 1 0 8 Z" fill="#4050e8"/><path d="M0 0 L0 8 A8 8 0 0 1 -6.9 4 Z" fill="#40a8e0"/><path d="M0 0 L-6.9 4 A8 8 0 0 1 -6.9 -4 Z" fill="#40c070"/><path d="M0 0 L-6.9 -4 A8 8 0 0 1 0 -8 Z" fill="#e8c850"/></g>
<path d="M1163 77 H1179" stroke="#e0e0e0" stroke-width="1.2"/><path d="M1163 82.3 H1179" stroke="#e0e0e0" stroke-width="2.4"/><path d="M1163 89.3 H1179" stroke="#e0e0e0" stroke-width="3.8"/>
<path d="M1163 101.5 H1178.5" stroke="#e0e0e0" stroke-width="1.1" stroke-dasharray="1 1"/><path d="M1163 104.7 H1178.5" stroke="#e0e0e0" stroke-width="1.1" stroke-dasharray="1.5 1"/><path d="M1163 108.3 H1178.5" stroke="#e0e0e0" stroke-width="1.2" stroke-dasharray="4 1.2"/><path d="M1163 111.3 H1178.5" stroke="#e0e0e0" stroke-width="1.1" stroke-dasharray="3 1.3"/><path d="M1163 114.3 H1178.5" stroke="#e0e0e0" stroke-width="1.1" stroke-dasharray="2.5 1.5 1 1.5"/>
<rect x="1194.5" y="54" width="14.8" height="14.5" fill="#0a0404" stroke="#8a8a8a" stroke-width="1"/>
<path d="M1185 83.8 H1248.5 M1185 108.4 H1248.5" stroke="#f4f4f4" stroke-width="1.1"/>
<g fill="#f0f0f0"><path d="M1350.8 59.3 H1358.4 L1354.6 63.3 Z"/><path d="M1350.8 82.5 H1358.4 L1354.6 86.5 Z"/><path d="M1350.8 106.3 H1358.4 L1354.6 110.3 Z"/></g>
<path d="M1353 131.3 L1357.8 136 M1358 132.3 V136.2 H1354" stroke="#e0e0e0" stroke-width="1.2"/>
<!-- ===== GROUPS ===== -->
<path d="M1375 56.5 H1370 V83.5 H1375 M1385 83.5 H1390 V70" stroke="#ececec" stroke-width="1.6"/>
<path d="M1375.5 60 H1381 L1383 62 H1384.5 V67 H1375.5 Z" fill="#58aef0"/><circle cx="1379.8" cy="74.8" r="4.3" fill="#8a8a8a" stroke="#bdbdbd" stroke-width="1.4"/>
<path d="M1391.5 52.5 L1393 58 L1398 55.5 L1395.2 60.3 L1400.5 61.5 L1395.2 62.8 L1398 67.5 L1393 65 L1391.5 70.5 L1390 65 L1385 67.5 L1387.8 62.8 L1382.5 61.5 L1387.8 60.3 L1385 55.5 L1390 58 Z" fill="#f7c95c"/><circle cx="1391.5" cy="61.5" r="3" fill="#fde9a8"/>
<g id="gsm"><path d="M1420 54 H1423 V69 H1420" stroke="#ececec" stroke-width="1.2"/><rect x="1412.5" y="56" width="4.6" height="4.2" stroke="#58aef0" stroke-width="1.1"/><circle cx="1414.8" cy="65.5" r="2.4" stroke="#c8c8c8" stroke-width="1.1" fill="#8a8a8a"/></g>
<path d="M1420.8 59 L1426 64.2 M1426 59 L1420.8 64.2" stroke="#f04060" stroke-width="1.5"/>
<path d="M1413 78 H1410.3 V93 H1413 M1419 78 H1421.5 V83" stroke="#ececec" stroke-width="1.2"/><rect x="1413.3" y="80" width="4.6" height="4.2" stroke="#58aef0" stroke-width="1.1"/><circle cx="1415.6" cy="89.5" r="2.4" stroke="#c8c8c8" stroke-width="1.1" fill="#8a8a8a"/>
<path d="M1418.5 90.5 L1423.5 84 L1426 86 L1421 92.5 L1418 93.3 Z" fill="#f7c95c"/><path d="M1423.5 84 L1424.7 82.5 L1427.2 84.5 L1426 86 Z" fill="#f05858"/>
<path d="M1413 102 H1410.3 V117 H1413 M1419 102 H1421.5 V105" stroke="#f4f4f4" stroke-width="1.2"/><rect x="1413.3" y="104" width="4.6" height="4.2" stroke="#60d880" stroke-width="1.1"/><circle cx="1415.6" cy="113.3" r="2.4" stroke="#60d880" stroke-width="1.1"/>
<path d="M1419.5 106.5 V117.5 L1422.3 115 L1424.3 119 L1426 118.2 L1424 114.3 L1427.5 114 Z" fill="#fff" stroke="#444" stroke-width=".6"/>
<!-- ===== UTILITIES ===== -->
<path d="M1455 60.5 V69 M1483 60.5 V69 M1457 64.5 H1481 M1459.8 62.7 L1456.8 64.5 L1459.8 66.3 M1478.2 62.7 L1481.2 64.5 L1478.2 66.3" stroke="#e0e0e0" stroke-width="1.1"/>
<rect x="1455" y="70.3" width="28.3" height="5.5" fill="#f7c95c"/><path d="M1458 70.3 v2 m3 -2 v2.8 m3 -2.8 v2 m3 -2 v2.8 m3 -2.8 v2 m3 -2 v2.8 m3 -2.8 v2 m3 -2 v2.8 m3 -2.8 v2" stroke="#a8842c" stroke-width=".7"/>
<path d="M1507 56.5 V67 L1509.8 64.5 L1511.8 68.5 L1513.3 67.7 L1511.4 63.8 L1514.8 63.5 Z" fill="#fff"/><rect x="1513.5" y="60.5" width="9.8" height="8" fill="#e4e4e4"/><path d="M1515 62.8 h1.3 m1.2 0 h4.5 M1515 64.8 h1.3 m1.2 0 h4.5 M1515 66.8 h1.3 m1.2 0 h4.5" stroke="#4a80c0" stroke-width=".9"/><path d="M1517.5 52.5 L1514.8 57 H1517.3 L1515.5 60.3 L1520.3 55.5 H1517.6 L1519.6 52.5Z" fill="#f7c95c"/>
<rect x="1507.3" y="78" width="13.6" height="12.6" rx="1" stroke="#60c878" stroke-width="1.1" stroke-dasharray="1.6 1"/><path d="M1509.5 80.5 H1516.5 V87.5 H1509.5 Z" fill="#60c878"/><path d="M1512.5 83.5 H1519.3 V89 H1512.5Z" fill="#3a8a50"/>
<path d="M1515.5 81.5 V92 L1518.2 89.6 L1520 93.3 L1521.6 92.5 L1519.8 88.8 L1523.2 88.5 Z" fill="#e8e8e8" stroke="#555" stroke-width=".5"/>
<rect x="1508.8" y="101.5" width="11.8" height="15.2" fill="#d2d2d2"/><rect x="1510.3" y="103.2" width="8.8" height="3" fill="#585858"/><g fill="#585858"><rect x="1510.3" y="108" width="2.2" height="1.9"/><rect x="1513.6" y="108" width="2.2" height="1.9"/><rect x="1516.9" y="108" width="2.2" height="1.9"/><rect x="1510.3" y="111" width="2.2" height="1.9"/><rect x="1513.6" y="111" width="2.2" height="1.9"/><rect x="1516.9" y="111" width="2.2" height="1.9"/><rect x="1510.3" y="114" width="2.2" height="1.9"/><rect x="1513.6" y="114" width="2.2" height="1.9"/><rect x="1516.9" y="114" width="2.2" height="1.9"/></g>
<!-- ===== CLIPBOARD ===== -->
<path d="M1544 56.5 H1565.5 V80 H1544 Z" fill="#d9ad6c"/><path d="M1551 56.5 V54.5 H1553 A2 2 0 0 1 1557 54.5 H1559 V56.5 Z" fill="#f0f0f0"/><rect x="1550" y="55.3" width="10" height="2.6" fill="#ececec"/>
<path d="M1552 62.5 H1564 L1570 68.5 V84 H1552 Z" fill="#dedede"/><path d="M1564 62.5 V68.5 H1570 Z" fill="#f8f8f8"/>
<rect x="1587" y="54" width="10.5" height="12.8" fill="#cdcdcd"/><path d="M1588.5 56.5 H1595.5 M1588.5 59 H1594 M1588.5 61.5 H1592 M1588.5 64 H1591" stroke="#585858" stroke-width="1"/>
<path d="M1593.5 58.5 L1600.5 66.5 M1601 58.5 L1594 66.5" stroke="#f0f0f0" stroke-width="1.2"/><circle cx="1594.5" cy="67.5" r="1.6" stroke="#f0f0f0" stroke-width="1"/><circle cx="1600.5" cy="67.5" r="1.6" stroke="#f0f0f0" stroke-width="1"/>
<path d="M1587.5 77.5 H1593 L1596 80.5 V88.5 H1587.5 Z" fill="#bdbdbd"/><path d="M1591.5 81 H1597 L1600.5 84.5 V92.5 H1591.5 Z" fill="#dcdcdc" stroke="#585858" stroke-width=".6"/>
<!-- ===== VIEW ===== -->
<path d="M1625.5 56 H1639 V65.8 H1656.5 V80 H1625.5 Z" fill="#e0e0e0"/>
<path d="M1661 131.3 L1665.8 136 M1666 132.3 V136.2 H1662" stroke="#e0e0e0" stroke-width="1.2"/>
</svg>
<div class="a" style="left:0;top:144.3px;width:1919px;height:26px;background:#333"></div>
<div class="a" style="left:0;top:169px;width:1919px;height:4px;background:linear-gradient(#585858,#5e5e5e)"></div>
<svg style="left:0;top:144px" width="1919" height="30" viewBox="0 144 1919 30"><defs><linearGradient id="tg" x1="0" y1="0" x2="0" y2="1"><stop offset="0" stop-color="#686868"/><stop offset="1" stop-color="#555"/></linearGradient><linearGradient id="tga" x1="0" y1="0" x2="0" y2="1"><stop offset="0" stop-color="#8c8c8c"/><stop offset=".5" stop-color="#727272"/><stop offset="1" stop-color="#5e5e5e"/></linearGradient></defs>
<path d="M9 169 C18 169 19 163 22 155.8 C24 148.8 27 146.8 33 146.8 L1820 146.8 C1827 146.8 1830 151.8 1830 157.8 C1830 165 1828 169 1824 169 Z" fill="url(#tg)"/>
<path d="M1609 169.5 C1618 169 1620 163 1623 155.8 C1625 149.3 1628 147.10000000000002 1634 147.10000000000002 L1820 147.10000000000002 C1827 147.10000000000002 1830 151.8 1831 157.8 C1832 165 1836 169 1842 169.5 Z" fill="url(#tga)" stroke="#8e8e8e" stroke-width=".8"/>
<path d="M135 146.5 C140.5 147.0 143 151.3 144 156.4 C145 151.3 147.5 147.8 153 146.5 Z" fill="#333"/>
<path d="M135 146.8 C140.5 147.3 143.5 151.3 144.2 156.8 C144.5 164 142 168.5 137 169" stroke="#6e6e6e" stroke-width=".9" fill="none" opacity=".8"/>
<path d="M153 146.8 C147.5 147.8 145.2 151.3 144 156.4" stroke="#707070" stroke-width=".8" fill="none" opacity=".7"/>
<path d="M316.5 146.5 C322.0 147.0 324.5 151.3 325.5 156.4 C326.5 151.3 329.0 147.8 334.5 146.5 Z" fill="#333"/>
<path d="M316.5 146.8 C322.0 147.3 325.0 151.3 325.7 156.8 C326.0 164 323.5 168.5 318.5 169" stroke="#6e6e6e" stroke-width=".9" fill="none" opacity=".8"/>
<path d="M334.5 146.8 C329.0 147.8 326.7 151.3 325.5 156.4" stroke="#707070" stroke-width=".8" fill="none" opacity=".7"/>
<path d="M482.5 146.5 C488.0 147.0 490.5 151.3 491.5 156.4 C492.5 151.3 495.0 147.8 500.5 146.5 Z" fill="#333"/>
<path d="M482.5 146.8 C488.0 147.3 491.0 151.3 491.7 156.8 C492.0 164 489.5 168.5 484.5 169" stroke="#6e6e6e" stroke-width=".9" fill="none" opacity=".8"/>
<path d="M500.5 146.8 C495.0 147.8 492.7 151.3 491.5 156.4" stroke="#707070" stroke-width=".8" fill="none" opacity=".7"/>
<path d="M612.5 146.5 C618.0 147.0 620.5 151.3 621.5 156.4 C622.5 151.3 625.0 147.8 630.5 146.5 Z" fill="#333"/>
<path d="M612.5 146.8 C618.0 147.3 621.0 151.3 621.7 156.8 C622.0 164 619.5 168.5 614.5 169" stroke="#6e6e6e" stroke-width=".9" fill="none" opacity=".8"/>
<path d="M630.5 146.8 C625.0 147.8 622.7 151.3 621.5 156.4" stroke="#707070" stroke-width=".8" fill="none" opacity=".7"/>
<path d="M777.5 146.5 C783.0 147.0 785.5 151.3 786.5 156.4 C787.5 151.3 790.0 147.8 795.5 146.5 Z" fill="#333"/>
<path d="M777.5 146.8 C783.0 147.3 786.0 151.3 786.7 156.8 C787.0 164 784.5 168.5 779.5 169" stroke="#6e6e6e" stroke-width=".9" fill="none" opacity=".8"/>
<path d="M795.5 146.8 C790.0 147.8 787.7 151.3 786.5 156.4" stroke="#707070" stroke-width=".8" fill="none" opacity=".7"/>
<path d="M929 146.5 C934.5 147.0 937 151.3 938 156.4 C939 151.3 941.5 147.8 947 146.5 Z" fill="#333"/>
<path d="M929 146.8 C934.5 147.3 937.5 151.3 938.2 156.8 C938.5 164 936 168.5 931 169" stroke="#6e6e6e" stroke-width=".9" fill="none" opacity=".8"/>
<path d="M947 146.8 C941.5 147.8 939.2 151.3 938 156.4" stroke="#707070" stroke-width=".8" fill="none" opacity=".7"/>
<path d="M1085 146.5 C1090.5 147.0 1093 151.3 1094 156.4 C1095 151.3 1097.5 147.8 1103 146.5 Z" fill="#333"/>
<path d="M1085 146.8 C1090.5 147.3 1093.5 151.3 1094.2 156.8 C1094.5 164 1092 168.5 1087 169" stroke="#6e6e6e" stroke-width=".9" fill="none" opacity=".8"/>
<path d="M1103 146.8 C1097.5 147.8 1095.2 151.3 1094 156.4" stroke="#707070" stroke-width=".8" fill="none" opacity=".7"/>
<path d="M1242 146.5 C1247.5 147.0 1250 151.3 1251 156.4 C1252 151.3 1254.5 147.8 1260 146.5 Z" fill="#333"/>
<path d="M1242 146.8 C1247.5 147.3 1250.5 151.3 1251.2 156.8 C1251.5 164 1249 168.5 1244 169" stroke="#6e6e6e" stroke-width=".9" fill="none" opacity=".8"/>
<path d="M1260 146.8 C1254.5 147.8 1252.2 151.3 1251 156.4" stroke="#707070" stroke-width=".8" fill="none" opacity=".7"/>
<path d="M1396 146.5 C1401.5 147.0 1404 151.3 1405 156.4 C1406 151.3 1408.5 147.8 1414 146.5 Z" fill="#333"/>
<path d="M1396 146.8 C1401.5 147.3 1404.5 151.3 1405.2 156.8 C1405.5 164 1403 168.5 1398 169" stroke="#6e6e6e" stroke-width=".9" fill="none" opacity=".8"/>
<path d="M1414 146.8 C1408.5 147.8 1406.2 151.3 1405 156.4" stroke="#707070" stroke-width=".8" fill="none" opacity=".7"/>
<path d="M1606.5 146.5 C1612.0 147.0 1614.5 151.3 1616.0 156.4 C1617.5 151.3 1620.0 147.8 1626.5 146.5 Z" fill="#333"/>
<path d="M1833 151.8 C1840 150.8 1846 150.3 1852 151.3 C1858 152.8 1860 158.8 1860 164.8 C1856 166.8 1846 166.8 1842 163.8 C1838 159.8 1837 154.8 1833 151.8 Z" fill="#4e4e4e" stroke="#444" stroke-width=".8"/>
<path d="M1842 158.8 H1851 M1846.5 154.3 V163.3" stroke="#e8e8e8" stroke-width="1.7" fill="none"/>
<path d="M1903 152 L1906.5 155.7 L1910 152 M1903 157.3 L1906.5 161 L1910 157.3" stroke="#d8d8d8" stroke-width="1.7" fill="none"/>
<path d="M308.1 155 L314.1 161.3 M314.1 155 L308.1 161.3" stroke="#2e2e2e" stroke-width="1.9" fill="none"/>
<path d="M473.5 155 L479.5 161.3 M479.5 155 L473.5 161.3" stroke="#2e2e2e" stroke-width="1.9" fill="none"/>
<path d="M602.5 155 L608.5 161.3 M608.5 155 L602.5 161.3" stroke="#2e2e2e" stroke-width="1.9" fill="none"/>
<path d="M766.5999999999999 155 L772.5999999999999 161.3 M772.5999999999999 155 L766.5999999999999 161.3" stroke="#2e2e2e" stroke-width="1.9" fill="none"/>
<path d="M919.0999999999999 155 L925.0999999999999 161.3 M925.0999999999999 155 L919.0999999999999 161.3" stroke="#2e2e2e" stroke-width="1.9" fill="none"/>
<path d="M1075.1 155 L1081.1 161.3 M1081.1 155 L1075.1 161.3" stroke="#2e2e2e" stroke-width="1.9" fill="none"/>
<path d="M1231.5 155 L1237.5 161.3 M1237.5 155 L1231.5 161.3" stroke="#2e2e2e" stroke-width="1.9" fill="none"/>
<path d="M1385.1 155 L1391.1 161.3 M1391.1 155 L1385.1 161.3" stroke="#2e2e2e" stroke-width="1.9" fill="none"/>
<path d="M1597.5 155 L1603.5 161.3 M1603.5 155 L1597.5 161.3" stroke="#2e2e2e" stroke-width="1.9" fill="none"/>
<path d="M1808.5 155 L1814.5 161.3 M1814.5 155 L1808.5 161.3" stroke="#2e2e2e" stroke-width="1.9" fill="none"/>
</svg>
<div class="t" style="left:32.3px;top:151.0px;font-size:13px;line-height:15px;color:#c5cad6;transform:scaleX(0.852);">Start</div>
<div class="t" style="left:155.0px;top:151.0px;font-size:13px;line-height:15px;color:#c5cad6;transform:scaleX(0.940);">Aksonometri-Ruang-Mode</div>
<div class="t" style="left:337.7px;top:151.0px;font-size:13px;line-height:15px;color:#c5cad6;transform:scaleX(0.848);">DENAH-KESELURUHAN</div>
<div class="t" style="left:502.7px;top:151.0px;font-size:13px;line-height:15px;color:#c5cad6;transform:scaleX(0.925);">Detail-Panggung</div>
<div class="t" style="left:633.0px;top:151.0px;font-size:13px;line-height:15px;color:#c5cad6;transform:scaleX(0.861);">PLAN-RUANG-KHUSUS</div>
<div class="t" style="left:797.0px;top:151.0px;font-size:13px;line-height:15px;color:#c5cad6;transform:scaleX(0.880);">Potongan R.Khusus 1</div>
<div class="t" style="left:949.3px;top:151.0px;font-size:13px;line-height:15px;color:#c5cad6;transform:scaleX(0.899);">Tampak berwarna A-B</div>
<div class="t" style="left:1105.0px;top:151.0px;font-size:13px;line-height:15px;color:#c5cad6;transform:scaleX(0.892);">Tampak berwarna C-D</div>
<div class="t" style="left:1262.0px;top:151.0px;font-size:13px;line-height:15px;color:#c5cad6;transform:scaleX(0.884);">Tampak berwarna E-F</div>
<div class="t" style="left:1415.0px;top:151.0px;font-size:13px;line-height:15px;color:#c5cad6;transform:scaleX(0.840);">AKSONOMETRI INTERIOR PLAN*</div>
<div class="t" style="left:1627.3px;top:151.0px;font-size:13px;line-height:15px;color:#ffffff;transform:scaleX(0.837);">AKSONOMETRI RUANG KHUSUS</div>
<div class="a" style="left:254px;top:173px;width:7px;height:829px;background:linear-gradient(90deg,#8a8a8a,#7d7d7d)"></div>
<div class="a" style="left:261px;top:173px;width:1326px;height:829px;background:#fff"></div>
<div class="a" style="left:1587px;top:173px;width:6px;height:829px;background:linear-gradient(90deg,#848484,#8a8a8a)"></div>
<div class="a" style="left:1912px;top:173px;width:7px;height:829px;background:#d6dff0"></div>
<svg style="left:0;top:0" width="1919" height="1027" viewBox="0 0 1919 1027" fill="none" stroke-linecap="butt" stroke-linejoin="round">
<path d="M290.5 173 V999.5 H1558.5 V173" stroke="#8c8c8c" stroke-width="1" stroke-dasharray="4 2"/>
<rect x="260.5" y="177.5" width="558" height="394" stroke="#96605f"/>
<rect x="929.5" y="177.5" width="557" height="394" stroke="#96605f"/>
<rect x="275.5" y="182.7" width="538" height="384.5" stroke="#ffff00" stroke-width="1.6"/>
<rect x="943.7" y="182.7" width="538.3" height="384.5" stroke="#ffff00" stroke-width="1.6"/>
<path d="M439 1002 V717.5 H834.5 V1002" stroke="#262626" stroke-width="1.2"/>
<path d="M873.5 1002 V720.2 H1269 V1002" stroke="#262626" stroke-width="1.2"/>
<clipPath id="c1"><path d="M419.7 420.7 L417.0 409.5 L433.6 389.5 L450.8 378.2 L469.6 368.0 L488.7 357.3 L508.7 347.2 L530.2 337.4 L552.2 329.4 L556.0 328.0 L573.5 332.2 L693.9 398.6 L536.6 489.2Z"/></clipPath>
<g clip-path="url(#c1)" stroke="#aaa41e" stroke-width="1.15">
<path d="M547.9 495.8 L355.8 383.3"/><path d="M559.2 489.3 L367.1 376.8"/><path d="M570.5 482.8 L378.4 370.2"/><path d="M581.8 476.3 L389.7 363.7"/><path d="M593.1 469.8 L401.0 357.2"/><path d="M604.4 463.2 L412.3 350.7"/><path d="M615.7 456.7 L423.6 344.2"/><path d="M627.0 450.2 L434.9 337.7"/><path d="M638.3 443.7 L446.2 331.2"/><path d="M649.6 437.2 L457.5 324.6"/><path d="M660.9 430.7 L468.8 318.1"/><path d="M672.2 424.1 L480.1 311.6"/><path d="M683.5 417.6 L491.4 305.1"/><path d="M694.8 411.1 L502.7 298.6"/><path d="M706.1 404.6 L514.0 292.1"/><path d="M525.3 495.7 L706.1 391.5"/><path d="M514.0 489.1 L694.8 384.8"/><path d="M502.7 482.5 L683.5 378.2"/><path d="M491.4 475.9 L672.2 371.6"/><path d="M480.1 469.2 L660.9 365.0"/><path d="M468.8 462.6 L649.6 358.4"/><path d="M457.5 456.0 L638.3 351.7"/><path d="M446.2 449.4 L627.0 345.1"/><path d="M434.9 442.8 L615.7 338.5"/><path d="M423.6 436.1 L604.4 331.9"/><path d="M412.3 429.5 L593.1 325.3"/><path d="M401.0 422.9 L581.8 318.6"/><path d="M389.7 416.3 L570.5 312.0"/><path d="M378.4 409.7 L559.2 305.4"/><path d="M367.1 403.0 L547.9 298.8"/><path d="M355.8 396.4 L536.6 292.2"/></g>
<path d="M382.6 420.8 L401.6 411.5 L418.2 420.8 L401.6 431.3Z" fill="#575757" stroke="none" />
<path d="M555.9 321.7 L572.6 310.3 L592.7 321.7 L573.5 332.2Z" fill="#575757" stroke="none" />
<path d="M378.5 339.9 L399.3 327.7 L416.4 327.7 L433.6 314.5 L450.8 303.0 L469.6 291.8 L488.7 280.6 L508.7 269.8 L530.2 259.8 L552.2 251.0" stroke="#b09468" stroke-width="1.46" />
<path d="M400.5 329.9 L417.6 329.9 L434.8 316.7 L452.0 305.2 L470.8 294.0 L489.9 282.8 L509.9 272.0 L531.4 262.0 L553.4 253.2" stroke="#b09468" stroke-width="1.22" />
<path d="M378.5 339.9 L378.5 420.7 L399.0 409.0" stroke="#b09468" stroke-width="1.46" />
<path d="M381.5 341.5 L381.5 419.0" stroke="#b09468" stroke-width="1.22" />
<path d="M551.2 251.0 L551.2 240.2 L572.2 228.4 L572.2 309.5" stroke="#b09468" stroke-width="1.46" />
<path d="M554.5 251.0 L554.5 241.5 L574.3 231.0" stroke="#b09468" stroke-width="1.22" />
<path d="M574.5 231.0 L574.5 309.5" stroke="#b09468" stroke-width="1.22" />
<path d="M382.6 341.9 L382.6 420.8 L401.6 431.8 L420.0 421.6 L420.0 342.0" stroke="#28c8f8" stroke-width="1.22" />
<path d="M382.6 341.9 L401.0 352.0 L420.0 341.5 L403.0 331.5" stroke="#28c8f8" stroke-width="1.22" />
<path d="M401.6 412.0 L401.6 431.8" stroke="#28c8f8" stroke-width="1.22" />
<path d="M555.9 241.9 L574.3 231.4 L592.7 241.4 L574.3 251.6 L555.9 241.9" stroke="#28c8f8" stroke-width="1.22" />
<path d="M592.7 241.4 L592.7 321.7 L573.5 332.5 L556.0 322.0" stroke="#28c8f8" stroke-width="1.22" />
<path d="M574.3 251.6 L574.3 266.5" stroke="#28c8f8" stroke-width="1.22" />
<path d="M419.4 356.6 L537.5 424.3" stroke="#ff22ff" stroke-width="1.22" />
<path d="M419.4 358.2 L537.5 425.9" stroke="#ff22ff" stroke-width="1.22" />
<path d="M419.4 421.0 L536.6 489.2" stroke="#ff22ff" stroke-width="1.22" />
<path d="M419.4 422.6 L536.6 490.8" stroke="#ff22ff" stroke-width="1.22" />
<path d="M573.5 266.5 L693.5 334.8" stroke="#ff22ff" stroke-width="1.22" />
<path d="M573.5 268.1 L693.5 336.4" stroke="#ff22ff" stroke-width="1.22" />
<path d="M573.5 330.6 L693.9 397.4" stroke="#ff22ff" stroke-width="1.22" />
<path d="M573.5 332.2 L693.9 399.0" stroke="#ff22ff" stroke-width="1.22" />
<path d="M536.6 489.8 L693.9 398.9" stroke="#ff22ff" stroke-width="1.46" />
<path d="M419.4 356.6 L419.4 422.0" stroke="#ff22ff" stroke-width="1.22" />
<path d="M420.9 356.6 L420.9 422.0" stroke="#ff22ff" stroke-width="1.22" />
<path d="M535.6 424.3 L535.6 490.5" stroke="#ff22ff" stroke-width="1.22" />
<path d="M537.8 424.3 L537.8 490.5" stroke="#ff22ff" stroke-width="1.22" />
<path d="M691.8 334.8 L691.8 399.0" stroke="#ff22ff" stroke-width="1.46" />
<path d="M694.2 334.8 L694.2 399.0" stroke="#ff22ff" stroke-width="1.46" />
<path d="M573.5 266.5 L573.5 331.5" stroke="#ff22ff" stroke-width="1.22" />
<path d="M574.9 266.5 L574.9 331.5" stroke="#ff22ff" stroke-width="1.22" />
<path d="M432.2 313.7 L432.2 389.5" stroke="#ff1c1c" stroke-width="1.59" />
<path d="M435.1 314.7 L435.1 388.5" stroke="#ff1c1c" stroke-width="1.59" />
<path d="M433.7 314.0 L433.7 389.5" stroke="#ff5a5a" stroke-width="1.59" />
<path d="M449.4 302.2 L449.4 378.2" stroke="#ff1c1c" stroke-width="1.59" />
<path d="M452.3 303.2 L452.3 377.2" stroke="#ff1c1c" stroke-width="1.59" />
<path d="M450.9 302.5 L450.9 378.2" stroke="#ff5a5a" stroke-width="1.59" />
<path d="M468.2 291.0 L468.2 368.0" stroke="#ff1c1c" stroke-width="1.59" />
<path d="M471.1 292.0 L471.1 367.0" stroke="#ff1c1c" stroke-width="1.59" />
<path d="M469.7 291.3 L469.7 368.0" stroke="#ff5a5a" stroke-width="1.59" />
<path d="M487.3 279.8 L487.3 357.3" stroke="#ff1c1c" stroke-width="1.59" />
<path d="M490.2 280.8 L490.2 356.3" stroke="#ff1c1c" stroke-width="1.59" />
<path d="M488.8 280.1 L488.8 357.3" stroke="#ff5a5a" stroke-width="1.59" />
<path d="M507.3 269.0 L507.3 347.2" stroke="#ff1c1c" stroke-width="1.59" />
<path d="M510.2 270.0 L510.2 346.2" stroke="#ff1c1c" stroke-width="1.59" />
<path d="M508.8 269.3 L508.8 347.2" stroke="#ff5a5a" stroke-width="1.59" />
<path d="M528.8 259.0 L528.8 337.4" stroke="#ff1c1c" stroke-width="1.59" />
<path d="M531.7 260.0 L531.7 336.4" stroke="#ff1c1c" stroke-width="1.59" />
<path d="M530.3 259.3 L530.3 337.4" stroke="#ff5a5a" stroke-width="1.59" />
<path d="M550.8 250.2 L550.8 329.4" stroke="#ff1c1c" stroke-width="1.59" />
<path d="M553.7 251.2 L553.7 328.4" stroke="#ff1c1c" stroke-width="1.59" />
<path d="M552.3 250.5 L552.3 329.4" stroke="#ff5a5a" stroke-width="1.59" />
<path d="M399.6 328.5 L399.6 406.0" stroke="#ff1c1c" stroke-width="1.59" />
<path d="M402.8 328.5 L402.8 406.0" stroke="#ff1c1c" stroke-width="1.59" />
<path d="M415.2 328.5 L415.2 406.0" stroke="#ff1c1c" stroke-width="1.59" />
<path d="M418.2 328.5 L418.2 406.0" stroke="#ff1c1c" stroke-width="1.59" />
<path d="M399.6 406.0 L403.0 409.5 L415.0 409.5 L418.2 406.0" stroke="#ff1c1c" stroke-width="1.83" />
<path d="M399.6 403.0 L403.0 406.5 L415.0 406.5 L418.2 403.0" stroke="#ff1c1c" stroke-width="1.46" />
<path d="M399.6 349.0 L403.0 352.0 L415.0 352.0 L418.2 349.0" stroke="#ff1c1c" stroke-width="2.44" />
<path d="M418.2 349.0 L433.6 337.7 L450.8 326.0 L469.6 313.7 L488.7 301.5 L508.7 289.8 L530.2 279.5 L552.2 271.8 L555.0 270.5" stroke="#ff1c1c" stroke-width="2.68" />
<path d="M417.0 409.5 L433.6 389.5 L450.8 378.2 L469.6 368.0 L488.7 357.3 L508.7 347.2 L530.2 337.4 L552.2 329.4 L556.0 328.0" stroke="#ff1c1c" stroke-width="3.17" />
<path d="M418.0 412.1 L434.6 392.1 L451.8 380.8 L470.6 370.6 L489.7 359.9 L509.7 349.8 L531.2 340.0 L553.2 332.0 L557.0 330.6" stroke="#c08080" stroke-width="1.22" />
<path d="M435.1 393.5 L452.3 382.2 L471.1 372.0 L490.2 361.3 L510.2 351.2 L531.7 341.4 L553.7 333.4 L557.5 332.0" stroke="#ff1c1c" stroke-width="1.46" />
<path d="M551.6 250.0 L551.6 329.5" stroke="#ff1c1c" stroke-width="1.71" />
<path d="M554.6 250.0 L554.6 329.5" stroke="#ff1c1c" stroke-width="1.71" />
<path d="M583.1 340.9 L583.1 314.7 L621.3 335.7 L621.3 360.2" stroke="#ff22ff" stroke-width="1.34" />
<path d="M583.1 340.2 L621.3 361.2" stroke="#ff1c1c" stroke-width="2.93" />
<path d="M583.1 341.0 L583.1 356.7 L621.3 378.6 L621.3 361.0" stroke="#f6f600" stroke-width="1.34" />
<path d="M584.0 357.8 L621.3 379.2" stroke="#f6f600" stroke-width="2.44" />
<path d="M454.7 413.8 L511.1 444.5 L511.1 458.5 L454.7 427.3 L454.7 413.8" stroke="#20e8f0" stroke-width="2.44" />
<path d="M462.8 418.2 L462.8 432.0" stroke="#20e8f0" stroke-width="3.17" />
<path d="M470.8 422.6 L470.8 436.4" stroke="#20e8f0" stroke-width="3.17" />
<path d="M478.9 427.0 L478.9 440.8" stroke="#20e8f0" stroke-width="3.17" />
<path d="M486.9 431.3 L486.9 445.1" stroke="#20e8f0" stroke-width="3.17" />
<path d="M495.0 435.7 L495.0 449.5" stroke="#20e8f0" stroke-width="3.17" />
<path d="M503.0 440.1 L503.0 453.9" stroke="#20e8f0" stroke-width="3.17" />
<path d="M445.4 432.2 L445.4 416.0 L454.7 411.1 L511.6 442.7 L511.6 458.0" stroke="#f6f600" stroke-width="1.22" />
<path d="M445.4 416.0 L500.0 446.0" stroke="#f6f600" stroke-width="1.22" />
<path d="M446.2 432.2 L454.7 427.8 L510.2 460.2 L501.8 465.1 L446.2 432.2" stroke="#ff1c1c" stroke-width="1.95" />
<path d="M533.5 436.2 L596.6 399.8 L585.9 393.5 L532.9 424.1 L527.2 424.0 L510.9 414.4 L511.4 411.5 L561.7 382.5 L551.0 376.2 L490.5 411.1 L490.5 415.7 L525.5 436.2Z" stroke="#ff1c1c" stroke-width="1.7"/>
<path d="M533.5 419.2 L596.6 382.8 L585.9 376.5 L532.9 407.1 L527.2 407.0 L510.9 397.4 L511.4 394.5 L561.7 365.5 L551.0 359.2 L490.5 394.1 L490.5 398.7 L525.5 419.2Z" stroke="#ff22ff" stroke-width="1.1"/>
<path d="M533.5 421.7 L596.6 385.3 L585.9 379.0 L532.9 409.6 L527.2 409.5 L510.9 399.9 L511.4 397.0 L561.7 368.0 L551.0 361.7 L490.5 396.6 L490.5 401.2 L525.5 421.7Z" stroke="#ff22ff" stroke-width="1"/>
<path d="M490.5 397.5 L490.5 392.9 L551.0 358.0 L561.7 364.3" stroke="#35ee35" stroke-width="1.22" />
<path d="M532.9 405.9 L585.9 375.3 L596.6 381.6" stroke="#35ee35" stroke-width="1.22" />
<path d="M490.5 397.5 L525.5 418.0" stroke="#35ee35" stroke-width="1.22" />
<path d="M533.5 436.2 L533.5 419.2" stroke="#ff22ff" stroke-width="1.22" />
<path d="M596.6 399.8 L596.6 382.8" stroke="#ff22ff" stroke-width="1.22" />
<path d="M585.9 393.5 L585.9 376.5" stroke="#ff22ff" stroke-width="1.22" />
<path d="M561.7 382.5 L561.7 365.5" stroke="#ff22ff" stroke-width="1.22" />
<path d="M551.0 376.2 L551.0 359.2" stroke="#ff22ff" stroke-width="1.22" />
<path d="M490.5 411.1 L490.5 394.1" stroke="#ff22ff" stroke-width="1.22" />
<path d="M525.5 436.2 L525.5 419.2" stroke="#ff22ff" stroke-width="1.22" />
<path d="M536.1 409.6 L539.1 407.8 L542.3 409.6 L539.1 411.4Z" fill="#8a8a8a" stroke="none" />
<path d="M566.6 392.0 L569.6 390.2 L572.8 392.0 L569.6 393.8Z" fill="#8a8a8a" stroke="none" />
<path d="M584.7 381.5 L587.7 379.7 L590.9 381.5 L587.7 383.3Z" fill="#8a8a8a" stroke="none" />
<path d="M472.9 401.0 L476.9 398.7 L481.4 401.3 L477.4 403.8 L472.9 401.0" stroke="#f6b27e" stroke-width="1.59" />
<path d="M472.9 401.0 L472.9 393.5 L476.9 391.2 L476.9 398.7" stroke="#f6b27e" stroke-width="1.71" />
<path d="M472.9 397.0 L476.9 394.7" stroke="#f6b27e" stroke-width="1.34" />
<path d="M472.9 401.0 L472.9 406.5" stroke="#f6b27e" stroke-width="1.46" />
<path d="M477.4 403.8 L477.4 409.0" stroke="#f6b27e" stroke-width="1.46" />
<path d="M481.4 401.3 L481.4 406.5" stroke="#f6b27e" stroke-width="1.46" />
<path d="M472.9 406.5 L477.4 409.0 L481.4 406.5" stroke="#f6b27e" stroke-width="1.34" />
<path d="M493.0 420.0 L497.0 417.7 L501.5 420.3 L497.5 422.8 L493.0 420.0" stroke="#f6b27e" stroke-width="1.59" />
<path d="M493.0 420.0 L493.0 412.5 L497.0 410.2 L497.0 417.7" stroke="#f6b27e" stroke-width="1.71" />
<path d="M493.0 416.0 L497.0 413.7" stroke="#f6b27e" stroke-width="1.34" />
<path d="M493.0 420.0 L493.0 425.5" stroke="#f6b27e" stroke-width="1.46" />
<path d="M497.5 422.8 L497.5 428.0" stroke="#f6b27e" stroke-width="1.46" />
<path d="M501.5 420.3 L501.5 425.5" stroke="#f6b27e" stroke-width="1.46" />
<path d="M493.0 425.5 L497.5 428.0 L501.5 425.5" stroke="#f6b27e" stroke-width="1.34" />
<path d="M522.9 433.0 L526.9 430.7 L531.4 433.3 L527.4 435.8 L522.9 433.0" stroke="#f6b27e" stroke-width="1.59" />
<path d="M522.9 433.0 L522.9 425.5 L526.9 423.2 L526.9 430.7" stroke="#f6b27e" stroke-width="1.71" />
<path d="M522.9 429.0 L526.9 426.7" stroke="#f6b27e" stroke-width="1.34" />
<path d="M522.9 433.0 L522.9 438.5" stroke="#f6b27e" stroke-width="1.46" />
<path d="M527.4 435.8 L527.4 441.0" stroke="#f6b27e" stroke-width="1.46" />
<path d="M531.4 433.3 L531.4 438.5" stroke="#f6b27e" stroke-width="1.46" />
<path d="M522.9 438.5 L527.4 441.0 L531.4 438.5" stroke="#f6b27e" stroke-width="1.34" />
<path d="M558.0 419.0 L554.0 416.7 L549.5 419.3 L553.5 421.8 L558.0 419.0" stroke="#f6b27e" stroke-width="1.59" />
<path d="M558.0 419.0 L558.0 411.5 L554.0 409.2 L554.0 416.7" stroke="#f6b27e" stroke-width="1.71" />
<path d="M558.0 415.0 L554.0 412.7" stroke="#f6b27e" stroke-width="1.34" />
<path d="M558.0 419.0 L558.0 424.5" stroke="#f6b27e" stroke-width="1.46" />
<path d="M553.5 421.8 L553.5 427.0" stroke="#f6b27e" stroke-width="1.46" />
<path d="M549.5 419.3 L549.5 424.5" stroke="#f6b27e" stroke-width="1.46" />
<path d="M558.0 424.5 L553.5 427.0 L549.5 424.5" stroke="#f6b27e" stroke-width="1.34" />
<path d="M577.8 408.0 L573.8 405.7 L569.3 408.3 L573.3 410.8 L577.8 408.0" stroke="#f6b27e" stroke-width="1.59" />
<path d="M577.8 408.0 L577.8 400.5 L573.8 398.2 L573.8 405.7" stroke="#f6b27e" stroke-width="1.71" />
<path d="M577.8 404.0 L573.8 401.7" stroke="#f6b27e" stroke-width="1.34" />
<path d="M577.8 408.0 L577.8 413.5" stroke="#f6b27e" stroke-width="1.46" />
<path d="M573.3 410.8 L573.3 416.0" stroke="#f6b27e" stroke-width="1.46" />
<path d="M569.3 408.3 L569.3 413.5" stroke="#f6b27e" stroke-width="1.46" />
<path d="M577.8 413.5 L573.3 416.0 L569.3 413.5" stroke="#f6b27e" stroke-width="1.34" />
<path d="M597.1 397.0 L593.1 394.7 L588.6 397.3 L592.6 399.8 L597.1 397.0" stroke="#f6b27e" stroke-width="1.59" />
<path d="M597.1 397.0 L597.1 389.5 L593.1 387.2 L593.1 394.7" stroke="#f6b27e" stroke-width="1.71" />
<path d="M597.1 393.0 L593.1 390.7" stroke="#f6b27e" stroke-width="1.34" />
<path d="M597.1 397.0 L597.1 402.5" stroke="#f6b27e" stroke-width="1.46" />
<path d="M592.6 399.8 L592.6 405.0" stroke="#f6b27e" stroke-width="1.46" />
<path d="M588.6 397.3 L588.6 402.5" stroke="#f6b27e" stroke-width="1.46" />
<path d="M597.1 402.5 L592.6 405.0 L588.6 402.5" stroke="#f6b27e" stroke-width="1.34" />
<path d="M494.8 386.0 L498.8 383.7 L503.3 386.3 L499.3 388.8 L494.8 386.0" stroke="#f6b27e" stroke-width="1.59" />
<path d="M494.8 386.0 L494.8 378.5 L498.8 376.2 L498.8 383.7" stroke="#f6b27e" stroke-width="1.71" />
<path d="M494.8 382.0 L498.8 379.7" stroke="#f6b27e" stroke-width="1.34" />
<path d="M494.8 386.0 L494.8 391.5" stroke="#f6b27e" stroke-width="1.46" />
<path d="M499.3 388.8 L499.3 394.0" stroke="#f6b27e" stroke-width="1.46" />
<path d="M503.3 386.3 L503.3 391.5" stroke="#f6b27e" stroke-width="1.46" />
<path d="M494.8 391.5 L499.3 394.0 L503.3 391.5" stroke="#f6b27e" stroke-width="1.34" />
<path d="M511.5 375.0 L515.5 372.7 L520.0 375.3 L516.0 377.8 L511.5 375.0" stroke="#f6b27e" stroke-width="1.59" />
<path d="M511.5 375.0 L511.5 367.5 L515.5 365.2 L515.5 372.7" stroke="#f6b27e" stroke-width="1.71" />
<path d="M511.5 371.0 L515.5 368.7" stroke="#f6b27e" stroke-width="1.34" />
<path d="M511.5 375.0 L511.5 380.5" stroke="#f6b27e" stroke-width="1.46" />
<path d="M516.0 377.8 L516.0 383.0" stroke="#f6b27e" stroke-width="1.46" />
<path d="M520.0 375.3 L520.0 380.5" stroke="#f6b27e" stroke-width="1.46" />
<path d="M511.5 380.5 L516.0 383.0 L520.0 380.5" stroke="#f6b27e" stroke-width="1.34" />
<path d="M530.8 365.0 L534.8 362.7 L539.3 365.3 L535.3 367.8 L530.8 365.0" stroke="#f6b27e" stroke-width="1.59" />
<path d="M530.8 365.0 L530.8 357.5 L534.8 355.2 L534.8 362.7" stroke="#f6b27e" stroke-width="1.71" />
<path d="M530.8 361.0 L534.8 358.7" stroke="#f6b27e" stroke-width="1.34" />
<path d="M530.8 365.0 L530.8 370.5" stroke="#f6b27e" stroke-width="1.46" />
<path d="M535.3 367.8 L535.3 373.0" stroke="#f6b27e" stroke-width="1.46" />
<path d="M539.3 365.3 L539.3 370.5" stroke="#f6b27e" stroke-width="1.46" />
<path d="M530.8 370.5 L535.3 373.0 L539.3 370.5" stroke="#f6b27e" stroke-width="1.34" />
<path d="M503.0 401.0 L507.0 398.7 L511.5 401.3 L507.5 403.8 L503.0 401.0" stroke="#f6b27e" stroke-width="1.59" />
<path d="M503.0 401.0 L503.0 393.5 L507.0 391.2 L507.0 398.7" stroke="#f6b27e" stroke-width="1.71" />
<path d="M503.0 397.0 L507.0 394.7" stroke="#f6b27e" stroke-width="1.34" />
<path d="M503.0 401.0 L503.0 406.5" stroke="#f6b27e" stroke-width="1.46" />
<path d="M507.5 403.8 L507.5 409.0" stroke="#f6b27e" stroke-width="1.46" />
<path d="M511.5 401.3 L511.5 406.5" stroke="#f6b27e" stroke-width="1.46" />
<path d="M503.0 406.5 L507.5 409.0 L511.5 406.5" stroke="#f6b27e" stroke-width="1.34" />
<path d="M426.0 417.0 L425.5 401.2" stroke="#6e6e6e" stroke-width="1.95" />
<path d="M426.0 408.2 L421.5 397.1" stroke="#6e6e6e" stroke-width="1.52" />
<path d="M426.0 408.2 L430.0 396.0" stroke="#6e6e6e" stroke-width="1.52" />
<path d="M426.0 408.2 L430.8 404.0" stroke="#6e6e6e" stroke-width="1.52" />
<path d="M426.0 408.2 L421.2 403.1" stroke="#6e6e6e" stroke-width="1.52" />
<path d="M426.0 408.2 L423.5 399.1" stroke="#6e6e6e" stroke-width="1.52" />
<path d="M426.0 408.2 L428.5 400.2" stroke="#6e6e6e" stroke-width="1.52" />
<path d="M426.0 408.2 L422.2 406.5" stroke="#6e6e6e" stroke-width="1.52" />
<path d="M426.0 408.2 L429.5 407.6" stroke="#6e6e6e" stroke-width="1.52" />
<path d="M422.5 402.3 L429.0 404.0" stroke="#6e6e6e" stroke-width="1.46" />
<path d="M423.0 405.4 L429.8 401.9" stroke="#6e6e6e" stroke-width="1.34" />
<rect x="423.6" y="410.7" width="4.8" height="6.7" fill="#757575" stroke="none"/>
<path d="M565.5 336.0 L565.0 321.0" stroke="#6e6e6e" stroke-width="1.95" />
<path d="M565.5 327.6 L561.0 317.0" stroke="#6e6e6e" stroke-width="1.52" />
<path d="M565.5 327.6 L569.5 316.0" stroke="#6e6e6e" stroke-width="1.52" />
<path d="M565.5 327.6 L570.3 323.6" stroke="#6e6e6e" stroke-width="1.52" />
<path d="M565.5 327.6 L560.7 322.8" stroke="#6e6e6e" stroke-width="1.52" />
<path d="M565.5 327.6 L563.0 319.0" stroke="#6e6e6e" stroke-width="1.52" />
<path d="M565.5 327.6 L568.0 320.0" stroke="#6e6e6e" stroke-width="1.52" />
<path d="M565.5 327.6 L561.7 326.0" stroke="#6e6e6e" stroke-width="1.52" />
<path d="M565.5 327.6 L569.0 327.0" stroke="#6e6e6e" stroke-width="1.52" />
<path d="M562.0 322.0 L568.5 323.6" stroke="#6e6e6e" stroke-width="1.46" />
<path d="M562.5 325.0 L569.3 321.6" stroke="#6e6e6e" stroke-width="1.34" />
<rect x="563.1" y="330.0" width="4.8" height="6.4" fill="#757575" stroke="none"/>
<path d="M1110.3 279.6 Q1125.7 272.1 1134.8 269.1 Q1143.9 266.1 1153.6 263.8 Q1163.2 261.4 1172.8 260.4 Q1182.5 259.3 1189.2 259.4 L1196.0 259.4" stroke="#ff22ff" stroke-width="1.59"/>
<path d="M1111.8 282.2 Q1127.2 274.7 1136.3 271.7 Q1145.4 268.7 1155.1 266.4 Q1164.7 264.0 1174.3 263.0 Q1184.0 261.9 1190.8 262.0 L1197.5 262.0" stroke="#ff22ff" stroke-width="1.22"/>
<path d="M1110.3 345.0 Q1125.7 334.5 1134.8 331.1 Q1143.9 327.8 1153.6 325.4 Q1163.2 323.0 1172.8 321.8 Q1182.5 320.6 1189.2 320.6 L1196.0 320.5" stroke="#ff22ff" stroke-width="1.59"/>
<path d="M1111.8 342.4 Q1127.2 331.9 1136.3 328.5 Q1145.4 325.2 1155.1 322.8 Q1164.7 320.4 1174.3 319.2 Q1184.0 318.0 1190.8 317.9 L1197.5 317.9" stroke="#ff22ff" stroke-width="1.22"/>
<path d="M1110.3 340.0 Q1125.7 329.5 1134.8 326.1 Q1143.9 322.8 1153.6 320.4 Q1163.2 318.0 1172.8 316.8 Q1182.5 315.6 1189.2 315.6 L1196.0 315.5" stroke="#ff22ff" stroke-width="1.22"/>
<path d="M1111.1 343.7 Q1126.5 333.2 1135.6 329.9 Q1144.7 326.5 1154.3 324.1 Q1164.0 321.7 1173.7 320.5 Q1183.3 319.3 1190.0 319.2 L1196.8 319.2" stroke="#ff22ff" stroke-width="1.1"/>
<path d="M1111.1 341.2 Q1126.5 330.7 1135.6 327.4 Q1144.7 324.0 1154.3 321.6 Q1164.0 319.2 1173.7 318.0 Q1183.3 316.8 1190.0 316.8 L1196.8 316.7" stroke="#ff22ff" stroke-width="1.1"/>
<path d="M1110.3 279.6 L1110.3 345.5" stroke="#ff22ff" stroke-width="1.59" />
<path d="M1112.8 281.0 L1112.8 342.0" stroke="#ff22ff" stroke-width="1.22" />
<path d="M1185.7 251.8 L1203.9 259.7 L1203.9 325.7 L1185.7 317.5 L1185.7 251.8" stroke="#ff22ff" stroke-width="1.34" />
<path d="M1188.9 253.2 L1188.9 318.8" stroke="#ff22ff" stroke-width="1.22" />
<path d="M1200.7 258.4 L1200.7 324.3" stroke="#ff22ff" stroke-width="1.22" />
<path d="M1196.0 259.4 L1203.9 259.7" stroke="#ff22ff" stroke-width="1.22" />
<path d="M1126.1 272.5 L1126.1 330.5" stroke="#ff1c1c" stroke-width="2.81" />
<path d="M1144.3 266.5 L1144.3 327.5" stroke="#ff1c1c" stroke-width="2.81" />
<path d="M1163.2 261.8 L1163.2 322.5" stroke="#ff1c1c" stroke-width="2.81" />
<path d="M1183.1 259.5 L1183.1 320.5" stroke="#ff1c1c" stroke-width="2.81" />
<path d="M1194.9 258.5 L1194.9 321.0" stroke="#ff1c1c" stroke-width="2.81" />
<path d="M1112.8 296.0 Q1125.7 290.5 1135.0 287.5 Q1144.3 284.5 1153.8 281.8 Q1163.2 279.0 1173.1 277.5 Q1183.0 276.0 1188.8 275.6 L1194.5 275.3" stroke="#ff1c1c" stroke-width="2.2"/>
<path d="M1110.3 345.6 L1289.6 448.2" stroke="#3030ff" stroke-width="1.16" />
<path d="M1230.7 260.8 Q1250.0 264.6 1260.7 268.4 Q1271.4 272.1 1281.1 277.0 Q1290.7 281.8 1298.2 286.6 Q1305.7 291.4 1311.1 296.8 Q1316.4 302.1 1320.2 308.0 L1323.9 313.9" stroke="#ff22ff" stroke-width="1.59"/>
<path d="M1231.0 263.3 Q1250.3 267.1 1261.0 270.9 Q1271.7 274.6 1281.3 279.5 Q1291.0 284.3 1298.5 289.1 Q1306.0 293.9 1311.3 299.2 Q1316.7 304.6 1320.5 310.5 L1324.2 316.4" stroke="#ff22ff" stroke-width="1.22"/>
<path d="M1230.7 325.7 Q1250.0 330.0 1260.7 333.8 Q1271.4 337.5 1281.1 342.3 Q1290.7 347.1 1298.2 352.0 Q1305.7 356.8 1311.1 362.1 L1316.4 367.5" stroke="#ff22ff" stroke-width="1.59"/>
<path d="M1231.0 328.2 Q1250.3 332.5 1261.0 336.2 Q1271.7 340.0 1281.3 344.8 Q1291.0 349.6 1298.5 354.5 Q1306.0 359.3 1311.3 364.6 L1316.7 370.0" stroke="#ff22ff" stroke-width="1.22"/>
<path d="M1230.7 260.8 L1230.7 325.7" stroke="#ff22ff" stroke-width="1.46" />
<path d="M1233.9 261.5 L1233.9 326.5" stroke="#ff22ff" stroke-width="1.22" />
<path d="M1290.7 281.8 L1290.7 347.1" stroke="#ff22ff" stroke-width="1.34" />
<path d="M1314.5 300.0 L1314.5 365.5" stroke="#ff22ff" stroke-width="1.22" />
<path d="M1316.9 303.0 L1316.9 368.0" stroke="#ff22ff" stroke-width="1.22" />
<path d="M1323.9 313.9 L1323.9 335.0" stroke="#ff22ff" stroke-width="1.34" />
<path d="M1324.9 331.0 L1339.9 338.5 L1339.9 405.0 L1324.9 397.5 L1324.9 331.0" stroke="#ff22ff" stroke-width="1.34" />
<path d="M1327.3 334.5 L1337.5 339.6 L1337.5 401.5 L1327.3 396.4" stroke="#ff22ff" stroke-width="1.22" />
<path d="M1289.6 382.5 Q1303.5 373.9 1308.8 369.1 Q1314.2 364.3 1317.5 358.9 Q1320.7 353.5 1322.8 343.9 L1324.9 334.3" stroke="#ff22ff" stroke-width="1.59"/>
<path d="M1291.6 385.5 Q1305.5 376.9 1310.8 372.1 Q1316.2 367.3 1319.5 361.9 L1322.7 356.5" stroke="#ff22ff" stroke-width="1.22"/>
<path d="M1289.6 448.9 Q1303.5 440.3 1308.8 435.5 Q1314.2 430.7 1318.5 424.2 Q1322.8 417.8 1324.9 410.3 L1327.0 402.8" stroke="#ff22ff" stroke-width="1.59"/>
<path d="M1288.1 445.7 Q1302.0 437.1 1307.3 432.3 Q1312.7 427.5 1317.0 421.1 Q1321.3 414.6 1323.4 407.1 L1325.5 399.6" stroke="#ff22ff" stroke-width="1.22"/>
<path d="M1287.1 443.4 Q1301.0 434.8 1306.3 430.0 Q1311.7 425.2 1316.0 418.8 L1320.3 412.3" stroke="#ff22ff" stroke-width="1.22"/>
<path d="M1288.7 382.5 L1288.7 449.2" stroke="#ff22ff" stroke-width="1.46" />
<path d="M1291.3 384.0 L1291.3 446.0" stroke="#ff22ff" stroke-width="1.22" />
<path d="M1302.6 374.5 L1302.6 436.0" stroke="#ff1c1c" stroke-width="2.93" />
<path d="M1312.8 365.0 L1312.8 425.5" stroke="#ff1c1c" stroke-width="2.93" />
<path d="M1320.6 354.0 L1320.6 414.5" stroke="#ff1c1c" stroke-width="2.93" />
<path d="M1323.6 334.5 L1323.6 403.0" stroke="#ff1c1c" stroke-width="1.46" />
<path d="M1325.4 334.5 L1325.4 403.0" stroke="#ff1c1c" stroke-width="1.46" />
<path d="M1327.2 334.5 L1327.2 403.0" stroke="#ff1c1c" stroke-width="1.46" />
<path d="M1289.6 398.5 Q1303.0 390.5 1308.5 386.0 Q1314.0 381.5 1317.5 375.8 L1321.0 370.0" stroke="#ff1c1c" stroke-width="1.95"/>
<path d="M1236.0 330.5 L1278.0 355.0 L1286.4 350.0 L1244.0 326.0 L1236.0 330.5" stroke="#f6b27e" stroke-width="1.46" />
<path d="M1236.0 330.5 L1236.0 349.5 L1278.0 375.5 L1286.4 370.5 L1286.4 350.0" stroke="#f6b27e" stroke-width="1.46" />
<path d="M1278.0 355.0 L1278.0 375.5" stroke="#f6b27e" stroke-width="1.46" />
<path d="M1238.0 347.5 L1278.0 372.0" stroke="#f6b27e" stroke-width="1.22" />
<path d="M1238.0 333.0 L1238.0 348.0" stroke="#f6b27e" stroke-width="1.22" />
<path d="M1241.0 331.0 L1280.0 353.5" stroke="#ff1c1c" stroke-width="2.68" />
<path d="M1243.0 329.0 L1282.0 351.0" stroke="#ff1c1c" stroke-width="1.46" />
<path d="M1244.0 338.0 L1244.0 351.0 L1262.0 361.5 L1262.0 348.5 L1244.0 338.0" stroke="#aef070" stroke-width="1.22" />
<path d="M1262.0 361.5 L1275.0 369.0" stroke="#aef070" stroke-width="1.22" />
<path d="M1250.0 334.0 L1258.0 339.0" stroke="#aef070" stroke-width="1.22" />
<ellipse cx="1280.5" cy="342.5" rx="4" ry="6.5" stroke="#f6b27e" stroke-width="1.1"/>
<path d="M1139.5 338.6 L1150.8 332.0 L1166.5 335.4 L1166.5 343.4 L1149.8 351.0 L1139.5 345.4 L1139.5 338.6" stroke="#aef070" stroke-width="1.4" />
<path d="M1139.5 338.6 L1149.8 343.0 L1166.5 335.4" stroke="#aef070" stroke-width="1.28" />
<path d="M1149.8 343.0 L1149.8 351.0" stroke="#aef070" stroke-width="1.28" />
<path d="M1142.2 341.0 L1142.2 347.0" stroke="#aef070" stroke-width="1.22" />
<path d="M1163.8 337.4 L1163.8 344.6" stroke="#aef070" stroke-width="1.22" />
<path d="M1142.7 339.4 L1151.7 335.0 L1163.3 337.0" stroke="#aef070" stroke-width="1.22" />
<path d="M1151.7 335.0 L1151.7 340.0" stroke="#aef070" stroke-width="1.22" />
<path d="M1144.9 342.2 L1150.8 344.6 L1162.5 340.0" stroke="#aef070" stroke-width="1.22" />
<path d="M1170.5 327.0 L1181.0 318.8 L1195.5 323.0 L1195.5 333.0 L1180.0 342.5 L1170.5 335.5 L1170.5 327.0" stroke="#aef070" stroke-width="1.4" />
<path d="M1170.5 327.0 L1180.0 332.5 L1195.5 323.0" stroke="#aef070" stroke-width="1.28" />
<path d="M1180.0 332.5 L1180.0 342.5" stroke="#aef070" stroke-width="1.28" />
<path d="M1173.0 330.0 L1173.0 337.5" stroke="#aef070" stroke-width="1.22" />
<path d="M1193.0 325.5 L1193.0 334.5" stroke="#aef070" stroke-width="1.22" />
<path d="M1173.5 328.0 L1181.8 322.5 L1192.5 325.0" stroke="#aef070" stroke-width="1.22" />
<path d="M1181.8 322.5 L1181.8 328.8" stroke="#aef070" stroke-width="1.22" />
<path d="M1175.5 331.5 L1181.0 334.5 L1191.8 328.8" stroke="#aef070" stroke-width="1.22" />
<path d="M1147.0 335.2 L1158.0 332.8" stroke="#ff22ff" stroke-width="1.59" />
<path d="M1178.0 327.5 L1190.0 325.8" stroke="#ff22ff" stroke-width="1.59" />
<path d="M1150.0 344.5 L1160.0 341.5" stroke="#ff22ff" stroke-width="1.46" />
<path d="M1178.0 337.2 L1188.0 335.4" stroke="#ff22ff" stroke-width="1.46" />
<path d="M1149.0 340.5 L1159.0 338.2" stroke="#e8a0d0" stroke-width="1.22" />
<path d="M1294.0 399.6 L1303.2 393.0 L1316.0 396.4 L1316.0 404.4 L1302.4 412.0 L1294.0 406.4 L1294.0 399.6" stroke="#aef070" stroke-width="1.4" />
<path d="M1294.0 399.6 L1302.4 404.0 L1316.0 396.4" stroke="#aef070" stroke-width="1.28" />
<path d="M1302.4 404.0 L1302.4 412.0" stroke="#aef070" stroke-width="1.28" />
<path d="M1296.2 402.0 L1296.2 408.0" stroke="#aef070" stroke-width="1.22" />
<path d="M1313.8 398.4 L1313.8 405.6" stroke="#aef070" stroke-width="1.22" />
<path d="M1296.6 400.4 L1303.9 396.0 L1313.4 398.0" stroke="#aef070" stroke-width="1.22" />
<path d="M1303.9 396.0 L1303.9 401.0" stroke="#aef070" stroke-width="1.22" />
<path d="M1298.4 403.2 L1303.2 405.6 L1312.7 401.0" stroke="#aef070" stroke-width="1.22" />
<path d="M1282.0 419.6 L1290.4 413.0 L1302.0 416.4 L1302.0 424.4 L1289.6 432.0 L1282.0 426.4 L1282.0 419.6" stroke="#aef070" stroke-width="1.4" />
<path d="M1282.0 419.6 L1289.6 424.0 L1302.0 416.4" stroke="#aef070" stroke-width="1.28" />
<path d="M1289.6 424.0 L1289.6 432.0" stroke="#aef070" stroke-width="1.28" />
<path d="M1284.0 422.0 L1284.0 428.0" stroke="#aef070" stroke-width="1.22" />
<path d="M1300.0 418.4 L1300.0 425.6" stroke="#aef070" stroke-width="1.22" />
<path d="M1284.4 420.4 L1291.0 416.0 L1299.6 418.0" stroke="#aef070" stroke-width="1.22" />
<path d="M1291.0 416.0 L1291.0 421.0" stroke="#aef070" stroke-width="1.22" />
<path d="M1286.0 423.2 L1290.4 425.6 L1299.0 421.0" stroke="#aef070" stroke-width="1.22" />
<path d="M1125.5 349.5 L1125.0 335.2" stroke="#6e6e6e" stroke-width="1.95" />
<path d="M1125.5 341.5 L1121.0 331.4" stroke="#6e6e6e" stroke-width="1.52" />
<path d="M1125.5 341.5 L1129.5 330.5" stroke="#6e6e6e" stroke-width="1.52" />
<path d="M1125.5 341.5 L1130.3 337.7" stroke="#6e6e6e" stroke-width="1.52" />
<path d="M1125.5 341.5 L1120.7 337.0" stroke="#6e6e6e" stroke-width="1.52" />
<path d="M1125.5 341.5 L1123.0 333.4" stroke="#6e6e6e" stroke-width="1.52" />
<path d="M1125.5 341.5 L1128.0 334.3" stroke="#6e6e6e" stroke-width="1.52" />
<path d="M1125.5 341.5 L1121.7 340.0" stroke="#6e6e6e" stroke-width="1.52" />
<path d="M1125.5 341.5 L1129.0 340.9" stroke="#6e6e6e" stroke-width="1.52" />
<path d="M1122.0 336.2 L1128.5 337.7" stroke="#6e6e6e" stroke-width="1.46" />
<path d="M1122.5 339.1 L1129.3 335.8" stroke="#6e6e6e" stroke-width="1.34" />
<rect x="1123.1" y="343.8" width="4.8" height="6.1" fill="#757575" stroke="none"/>
<path d="M1241.5 329.5 L1241.0 318.2" stroke="#6e6e6e" stroke-width="1.95" />
<path d="M1241.5 323.2 L1237.0 315.2" stroke="#6e6e6e" stroke-width="1.52" />
<path d="M1241.5 323.2 L1245.5 314.5" stroke="#6e6e6e" stroke-width="1.52" />
<path d="M1241.5 323.2 L1246.3 320.2" stroke="#6e6e6e" stroke-width="1.52" />
<path d="M1241.5 323.2 L1236.7 319.6" stroke="#6e6e6e" stroke-width="1.52" />
<path d="M1241.5 323.2 L1239.0 316.8" stroke="#6e6e6e" stroke-width="1.52" />
<path d="M1241.5 323.2 L1244.0 317.5" stroke="#6e6e6e" stroke-width="1.52" />
<path d="M1241.5 323.2 L1237.7 322.0" stroke="#6e6e6e" stroke-width="1.52" />
<path d="M1241.5 323.2 L1245.0 322.8" stroke="#6e6e6e" stroke-width="1.52" />
<path d="M1238.0 319.0 L1244.5 320.2" stroke="#6e6e6e" stroke-width="1.46" />
<path d="M1238.5 321.2 L1245.3 318.7" stroke="#6e6e6e" stroke-width="1.34" />
<rect x="1239.1" y="325.0" width="4.8" height="4.8" fill="#757575" stroke="none"/>
<path d="M1287.0 442.5 L1286.5 428.2" stroke="#6e6e6e" stroke-width="1.95" />
<path d="M1287.0 434.5 L1282.5 424.4" stroke="#6e6e6e" stroke-width="1.52" />
<path d="M1287.0 434.5 L1291.0 423.5" stroke="#6e6e6e" stroke-width="1.52" />
<path d="M1287.0 434.5 L1291.8 430.7" stroke="#6e6e6e" stroke-width="1.52" />
<path d="M1287.0 434.5 L1282.2 430.0" stroke="#6e6e6e" stroke-width="1.52" />
<path d="M1287.0 434.5 L1284.5 426.4" stroke="#6e6e6e" stroke-width="1.52" />
<path d="M1287.0 434.5 L1289.5 427.3" stroke="#6e6e6e" stroke-width="1.52" />
<path d="M1287.0 434.5 L1283.2 433.0" stroke="#6e6e6e" stroke-width="1.52" />
<path d="M1287.0 434.5 L1290.5 433.9" stroke="#6e6e6e" stroke-width="1.52" />
<path d="M1283.5 429.2 L1290.0 430.7" stroke="#6e6e6e" stroke-width="1.46" />
<path d="M1284.0 432.1 L1290.8 428.8" stroke="#6e6e6e" stroke-width="1.34" />
<rect x="1284.6" y="436.8" width="4.8" height="6.1" fill="#757575" stroke="none"/>
<clipPath id="c3"><rect x="439.6" y="718.2" width="394.4" height="284"/></clipPath>
<g clip-path="url(#c3)">
<clipPath id="c3f"><path d="M439.5 945.5 L718.0 933.7 L834.5 911.6 L834.5 910.7 L745.5 884.4 L728.0 882.0 L467.6 889.5 L452.0 900.0 L439.5 921.0Z"/></clipPath>
<g clip-path="url(#c3f)" stroke="#aaa41e" stroke-width="1.15">
<path d="M515.6 815 L-461.2 1084.5"/><path d="M515.6 815 L-379.8 1084.5"/><path d="M515.6 815 L-298.4 1084.5"/><path d="M515.6 815 L-217.0 1084.5"/><path d="M515.6 815 L-135.6 1084.5"/><path d="M515.6 815 L-54.2 1084.5"/><path d="M515.6 815 L27.2 1084.5"/><path d="M515.6 815 L108.6 1084.5"/><path d="M515.6 815 L190.0 1084.5"/><path d="M515.6 815 L271.4 1084.5"/><path d="M515.6 815 L352.8 1084.5"/><path d="M515.6 815 L434.2 1084.5"/><path d="M515.6 815 L515.6 1084.5"/><path d="M515.6 815 L597.0 1084.5"/><path d="M515.6 815 L678.4 1084.5"/><path d="M515.6 815 L759.8 1084.5"/><path d="M515.6 815 L841.2 1084.5"/><path d="M515.6 815 L922.6 1084.5"/><path d="M515.6 815 L1004.0 1084.5"/><path d="M515.6 815 L1085.4 1084.5"/><path d="M515.6 815 L1166.8 1084.5"/><path d="M515.6 815 L1248.2 1084.5"/><path d="M430 941.2 L840 932.6"/><path d="M430 931.1 L840 923.2"/><path d="M430 922.5 L840 915.1"/><path d="M430 915.1 L840 908.2"/><path d="M430 908.7 L840 902.2"/><path d="M430 903.0 L840 896.9"/><path d="M430 897.9 L840 892.3"/><path d="M430 893.5 L840 888.1"/><path d="M430 889.4 L840 884.3"/><path d="M430 885.8 L840 880.9"/><path d="M430 882.5 L840 877.9"/><path d="M430 879.5 L840 875.1"/><path d="M430 876.8 L840 872.5"/><path d="M430 874.2 L840 870.2"/><path d="M430 871.9 L840 868.0"/><path d="M430 869.8 L840 866.0"/></g>
<path d="M439.5 945.8 L718.0 934.0 L834.5 911.9" stroke="#ff22ff" stroke-width="1.59" />
<path d="M745.5 884.4 L834.5 910.7" stroke="#ff22ff" stroke-width="1.59" />
<path d="M745.5 886.2 L834.5 912.4" stroke="#ff22ff" stroke-width="1.22" />
<path d="M440.0 752.2 L447.8 751.4 L464.0 750.7 L734.4 757.6" stroke="#b09468" stroke-width="2.2" />
<path d="M733.0 757.5 L733.0 881.0" stroke="#b09468" stroke-width="1.46" />
<path d="M735.2 757.5 L735.2 881.0" stroke="#b09468" stroke-width="1.22" />
<path d="M735.0 757.5 L747.3 754.0 L780.6 754.0 L768.3 757.5 L735.0 757.5" stroke="#28c8f8" stroke-width="1.22" />
<path d="M747.3 754.0 L747.3 884.6" stroke="#28c8f8" stroke-width="1.34" />
<path d="M780.6 755.0 L780.6 884.6" stroke="#28c8f8" stroke-width="1.34" />
<path d="M768.3 757.5 L768.3 812.0" stroke="#b09468" stroke-width="1.46" />
<path d="M766.0 757.5 L766.0 812.0" stroke="#b09468" stroke-width="1.22" />
<path d="M747.3 884.6 L780.6 884.6" stroke="#28c8f8" stroke-width="1.34" />
<path d="M735.9 880.4 L778.0 880.4 L780.0 885.3 L747.0 885.3Z" fill="#5a5a5a" stroke="none" />
<path d="M440.0 748.0 L443.0 748.5 L445.5 752.0 L447.5 905.0" stroke="#28c8f8" stroke-width="1.22" />
<path d="M440.0 774.0 L442.5 775.5" stroke="#ff22ff" stroke-width="1.22" />
<path d="M447.2 751.0 L449.7 903.0" stroke="#ff1c1c" stroke-width="1.59" />
<path d="M449.6 751.0 L452.1 903.0" stroke="#ff1c1c" stroke-width="1.59" />
<path d="M448.4 751.0 L450.9 903.0" stroke="#ff5c5c" stroke-width="1.34" />
<path d="M464.7 751.4 L464.7 881.5" stroke="#ff1c1c" stroke-width="1.59" />
<path d="M467.1 751.4 L467.1 881.5" stroke="#ff1c1c" stroke-width="1.59" />
<path d="M465.9 751.4 L465.9 881.5" stroke="#ff5c5c" stroke-width="1.34" />
<path d="M503.9 752.3 L503.9 880.8" stroke="#ff1c1c" stroke-width="1.59" />
<path d="M506.3 752.3 L506.3 880.8" stroke="#ff1c1c" stroke-width="1.59" />
<path d="M505.1 752.3 L505.1 880.8" stroke="#ff5c5c" stroke-width="1.34" />
<path d="M542.1 753.2 L542.1 880.1" stroke="#ff1c1c" stroke-width="1.59" />
<path d="M544.5 753.2 L544.5 880.1" stroke="#ff1c1c" stroke-width="1.59" />
<path d="M543.3 753.2 L543.3 880.1" stroke="#ff5c5c" stroke-width="1.34" />
<path d="M579.4 754.1 L579.4 879.4" stroke="#ff1c1c" stroke-width="1.59" />
<path d="M581.8 754.1 L581.8 879.4" stroke="#ff1c1c" stroke-width="1.59" />
<path d="M580.6 754.1 L580.6 879.4" stroke="#ff5c5c" stroke-width="1.34" />
<path d="M615.4 754.9 L615.4 878.7" stroke="#ff1c1c" stroke-width="1.59" />
<path d="M617.8 754.9 L617.8 878.7" stroke="#ff1c1c" stroke-width="1.59" />
<path d="M616.6 754.9 L616.6 878.7" stroke="#ff5c5c" stroke-width="1.34" />
<path d="M651.0 755.7 L651.0 878.0" stroke="#ff1c1c" stroke-width="1.59" />
<path d="M653.4 755.7 L653.4 878.0" stroke="#ff1c1c" stroke-width="1.59" />
<path d="M652.2 755.7 L652.2 878.0" stroke="#ff5c5c" stroke-width="1.34" />
<path d="M686.4 756.6 L686.4 877.4" stroke="#ff1c1c" stroke-width="1.59" />
<path d="M688.8 756.6 L688.8 877.4" stroke="#ff1c1c" stroke-width="1.59" />
<path d="M687.6 756.6 L687.6 877.4" stroke="#ff5c5c" stroke-width="1.34" />
<path d="M720.3 757.3 L720.3 876.8" stroke="#ff1c1c" stroke-width="1.59" />
<path d="M722.7 757.3 L722.7 876.8" stroke="#ff1c1c" stroke-width="1.59" />
<path d="M721.5 757.3 L721.5 876.8" stroke="#ff5c5c" stroke-width="1.34" />
<path d="M723.4 757.4 L723.4 876.7" stroke="#ff1c1c" stroke-width="1.59" />
<path d="M725.8 757.4 L725.8 876.7" stroke="#ff1c1c" stroke-width="1.59" />
<path d="M724.6 757.4 L724.6 876.7" stroke="#ff5c5c" stroke-width="1.34" />
<path d="M448.0 787.4 L734.4 790.9" stroke="#ff1c1c" stroke-width="3.42" />
<path d="M448.0 787.4 L734.4 790.9" stroke="#ff7070" stroke-width="0.85" />
<path d="M466.0 881.2 L729.0 876.3" stroke="#ff1c1c" stroke-width="3.17" />
<path d="M466.0 884.3 L729.0 879.4" stroke="#ff1c1c" stroke-width="1.34" />
<path d="M466.0 887.5 L724.0 882.8" stroke="#b09468" stroke-width="1.22" />
<path d="M449.0 903.0 L466.0 884.0" stroke="#ff1c1c" stroke-width="1.83" />
<path d="M735.0 861.0 L735.0 814.5 L768.3 814.5 L768.3 869.5" stroke="#ff22ff" stroke-width="1.46" />
<path d="M733.3 861.3 L767.4 869.3" stroke="#ff1c1c" stroke-width="3.42" />
<path d="M768.3 869.7 L768.3 904.7" stroke="#f6f600" stroke-width="1.34" />
<path d="M738.0 887.0 L766.0 903.0 L768.0 905.0" stroke="#e0f060" stroke-width="1.22" stroke-dasharray="2 2"/>
<path d="M747.3 778.9 L834.5 765.9" stroke="#ff22ff" stroke-width="1.83" />
<path d="M746.5 778.9 L746.5 884.6" stroke="#ff22ff" stroke-width="1.34" />
<path d="M527 873 Q524.5 869 527 866.3 Q528.5 864.6 532 864.4 L677.5 861.9 L680.6 865 M552.5 873 Q550.5 870.5 553.5 868.8 L702.5 868.8 L705 872.5" stroke="#35ee35" stroke-width="1.1"/>
<path d="M527.5 873.0 L527.5 867.5 L531.0 865.8 L676.0 863.4 L679.0 866.0" stroke="#ff22ff" stroke-width="1.34" />
<path d="M530.0 868.6 L551.0 868.4" stroke="#c070e0" stroke-width="1.95" />
<path d="M560.0 867.5 L676.0 865.5" stroke="#c070e0" stroke-width="1.83" />
<path d="M554.0 870.3 L703.8 870.3 L703.8 907.5" stroke="#ff22ff" stroke-width="1.34" />
<path d="M554.0 873.0 L703.0 873.0" stroke="#c070e0" stroke-width="1.83" />
<path d="M527.5 873.0 L527.5 905.0 L530.0 910.0 L534.0 907.0 L534.0 872.0" stroke="#ff22ff" stroke-width="1.34" />
<path d="M546.3 873.5 L546.3 907.5" stroke="#ff22ff" stroke-width="1.22" />
<path d="M551.3 873.5 L551.3 907.5" stroke="#ff22ff" stroke-width="1.22" />
<path d="M557.5 873.5 L557.5 907.5" stroke="#ff22ff" stroke-width="1.22" />
<path d="M561.3 873.5 L561.3 907.5" stroke="#ff22ff" stroke-width="1.22" />
<path d="M527.5 910.5 L703.8 907.8" stroke="#ff2a60" stroke-width="2.56" />
<path d="M552.5 896.3 L675.0 893.8" stroke="#ff1c1c" stroke-width="1.95" />
<path d="M551.0 905.5 L695.0 903.8" stroke="#ff2a60" stroke-width="1.95" />
<path d="M540.0 876.5 L700.0 875.0" stroke="#ff1c1c" stroke-width="2.2" />
<path d="M560.0 886.5 L690.0 884.5" stroke="#ff1c1c" stroke-width="1.46" />
<path d="M552.0 900.5 L640.0 899.5" stroke="#ff3070" stroke-width="1.46" />
<rect x="533.8" y="866.1" width="10" height="2.7" fill="#777" stroke="none"/><rect x="624.4" y="867.6" width="12" height="3" fill="#777" stroke="none"/><rect x="673" y="867.3" width="11.4" height="3" fill="#777" stroke="none"/>
<path d="M567.5 879.5 V872.8 Q567.5 866.9 575.5 866.9 Q583.5 866.9 583.5 872.8 V879.5 M566.5 876.4 H584.5 M566.5 879.5 H584.5 M568.5 879.5 V887.9 M582.5 879.5 V887.9 M568.5 887.9 H582.5" stroke="#f6b27e" stroke-width="1.5"/>
<path d="M606.0 878.2 V871.5 Q606.0 865.6 614.2 865.6 Q622.5 865.6 622.5 871.5 V878.2 M605.0 875.1 H623.5 M605.0 878.2 H623.5 M607.0 878.2 V886.6 M621.5 878.2 V886.6 M607.0 886.6 H621.5" stroke="#f6b27e" stroke-width="1.5"/>
<path d="M643.8 877.6 V870.9 Q643.8 865.0 651.9 865.0 Q660.0 865.0 660.0 870.9 V877.6 M642.8 874.5 H661.0 M642.8 877.6 H661.0 M644.8 877.6 V886.0 M659.0 877.6 V886.0 M644.8 886.0 H659.0" stroke="#f6b27e" stroke-width="1.5"/>
<path d="M582.5 901.8 V891.2 Q582.5 882.0 591.8 882.0 Q601.0 882.0 601.0 891.2 V901.8 M581.5 896.9 H602.0 M581.5 901.8 H602.0 M583.5 901.8 V915.0 M600.0 901.8 V915.0 M583.5 915.0 H600.0" stroke="#f6b27e" stroke-width="1.7"/>
<path d="M630.0 900.8 V890.2 Q630.0 881.0 639.4 881.0 Q648.8 881.0 648.8 890.2 V900.8 M629.0 895.9 H649.8 M629.0 900.8 H649.8 M631.0 900.8 V914.0 M647.8 900.8 V914.0 M631.0 914.0 H647.8" stroke="#f6b27e" stroke-width="1.7"/>
<path d="M677.5 899.5 V889.1 Q677.5 880.0 686.8 880.0 Q696.0 880.0 696.0 889.1 V899.5 M676.5 894.6 H697.0 M676.5 899.5 H697.0 M678.5 899.5 V912.5 M695.0 899.5 V912.5 M678.5 912.5 H695.0" stroke="#f6b27e" stroke-width="1.7"/>
<path d="M513 884 V874 Q513 868.8 518.5 868.8 Q524.5 868.8 525 875 V884 M502.5 875.5 L509 885 H531 L533 878 M507 886 L516 881 L528 886 M517 886 V905 H506 M511 892 H532 M521 905 V913 H513 M524 898 V914.5 H534" stroke="#f6b27e" stroke-width="1.6"/>
<path d="M447.0 893.0 L464.0 871.0 L464.0 905.0 L447.0 936.0Z" fill="#30e6ee" stroke="none" opacity=".85"/>
<path d="M448.5 892.0 L448.5 934.0" stroke="#bff" stroke-width="0.98" />
<path d="M451.3 888.5 L451.3 928.7" stroke="#bff" stroke-width="0.98" />
<path d="M454.1 885.0 L454.1 923.4" stroke="#bff" stroke-width="0.98" />
<path d="M456.9 881.5 L456.9 918.1" stroke="#bff" stroke-width="0.98" />
<path d="M459.7 878.0 L459.7 912.8" stroke="#bff" stroke-width="0.98" />
<path d="M462.5 874.5 L462.5 907.5" stroke="#bff" stroke-width="0.98" />
<path d="M440.5 867.0 L464.0 866.0 L469.0 869.5" stroke="#f6f600" stroke-width="1.34" />
<path d="M440.5 892.0 L452.0 879.0 L440.5 879.0" stroke="#f6f600" stroke-width="1.22" />
<path d="M440.5 867.0 L440.5 900.0" stroke="#f6f600" stroke-width="1.22" />
<path d="M439.5 927.0 L447.0 920.0 L447.0 936.0 L439.5 946.0" stroke="#ff1c1c" stroke-width="1.71" />
<path d="M731.0 885.5 L731.0 858.2" stroke="#6e6e6e" stroke-width="2.44" />
<path d="M731.0 867.8 L722.0 859.6" stroke="#6e6e6e" stroke-width="2.2" />
<path d="M731.0 865.3 L739.0 851.5" stroke="#6e6e6e" stroke-width="2.2" />
<path d="M731.0 870.1 L740.0 867.3" stroke="#6e6e6e" stroke-width="1.95" />
<path d="M731.0 869.6 L724.0 865.9" stroke="#6e6e6e" stroke-width="1.83" />
<path d="M731.0 871.6 L737.5 872.5" stroke="#6e6e6e" stroke-width="1.83" />
<path d="M731.0 866.5 L726.0 855.4" stroke="#6e6e6e" stroke-width="1.71" />
<path d="M731.0 868.2 L735.0 861.0" stroke="#6e6e6e" stroke-width="1.71" />
<path d="M731.0 868.8 L723.0 863.1" stroke="#6e6e6e" stroke-width="1.59" />
<rect x="727.0" y="876.0" width="8" height="9.5" fill="#757575" stroke="none"/>
<path d="M459.0 871.0 L459.0 862.0 L450.0 859.5" stroke="#777" stroke-width="2.44" />
<path d="M459.0 864.0 L467.0 856.0" stroke="#777" stroke-width="2.44" />
<path d="M458.0 866.0 L468.0 869.0" stroke="#777" stroke-width="2.44" />
<rect x="464" y="869.5" width="6" height="3" fill="#777" stroke="none"/>
</g>
<clipPath id="c4"><rect x="874.1" y="720.8" width="394.3" height="282"/></clipPath>
<g clip-path="url(#c4)">
<path d="M875.5 805.6 L921.4 806.4 L923.7 911.5" stroke="#ff22ff" stroke-width="1.46" />
<path d="M875.5 807.5 L919.5 808.2" stroke="#ff22ff" stroke-width="1.22" />
<path d="M891.0 806.0 L893.4 913.0" stroke="#ff22ff" stroke-width="1.34" />
<path d="M918.5 808.0 L920.5 909.0" stroke="#ff22ff" stroke-width="1.22" />
<path d="M874.0 925.0 L933.9 909.2" stroke="#ff22ff" stroke-width="1.59" />
<path d="M874.0 921.0 L930.0 906.5" stroke="#ff22ff" stroke-width="1.46" />
<path d="M874.0 917.0 L925.0 904.0" stroke="#ff22ff" stroke-width="1.22" />
<path d="M878.9 805.8 L881.5 913.9" stroke="#ff1c1c" stroke-width="1.71" />
<path d="M882.7 805.8 L885.3 913.9" stroke="#ff1c1c" stroke-width="1.71" />
<path d="M880.8 805.8 L883.4 913.9" stroke="#ff1c1c" stroke-width="1.34" />
<path d="M898.2 805.8 L900.8 910.0" stroke="#ff1c1c" stroke-width="1.71" />
<path d="M901.6 805.8 L904.2 910.0" stroke="#ff1c1c" stroke-width="1.71" />
<path d="M899.9 805.8 L902.5 910.0" stroke="#ff1c1c" stroke-width="1.34" />
<path d="M910.0 805.8 L912.6 907.6" stroke="#ff1c1c" stroke-width="1.71" />
<path d="M914.8 805.8 L917.4 907.6" stroke="#ff1c1c" stroke-width="1.71" />
<path d="M912.4 805.8 L915.0 907.6" stroke="#ff1c1c" stroke-width="1.34" />
<path d="M875.0 833.5 L915.2 833.5" stroke="#ff1c1c" stroke-width="3.17" />
<path d="M877.0 902.0 L890.0 897.0 L924.0 894.5 L939.5 900.5 L940.0 917.5 L905.0 921.0 L877.0 917.0 L877.0 902.0" stroke="#aef070" stroke-width="1.34" />
<path d="M884.0 903.0 L884.0 917.0" stroke="#aef070" stroke-width="1.22" />
<path d="M890.0 897.0 L890.0 912.0" stroke="#aef070" stroke-width="1.22" />
<path d="M920.0 897.0 L921.0 913.0 L940.0 912.0" stroke="#aef070" stroke-width="1.22" />
<path d="M905.0 908.0 L905.0 921.0" stroke="#aef070" stroke-width="1.22" />
<path d="M877.0 908.0 L905.0 908.0 L939.5 905.5" stroke="#aef070" stroke-width="1.22" />
<path d="M874.5 934.0 L878.0 931.0 L874.5 928.0" stroke="#777" stroke-width="1.46" />
<path d="M875.0 902.0 L879.0 904.0" stroke="#777" stroke-width="1.46" />
<path d="M875.0 914.0 L880.0 913.0" stroke="#777" stroke-width="1.46" />
<path d="M874.3 937.9 L1240.6 919.7" stroke="#3030ff" stroke-width="1.16" />
<path d="M949.0 908.7 L948.7 807.3 L1112.4 808.0 L1111.7 903.8" stroke="#ff22ff" stroke-width="1.46" />
<path d="M956.2 907.5 L955.2 808.0" stroke="#ff22ff" stroke-width="1.34" />
<path d="M1029.7 808.0 L1029.7 902.0" stroke="#ff22ff" stroke-width="1.46" />
<path d="M1090.3 808.0 L1090.3 902.5" stroke="#ff22ff" stroke-width="1.34" />
<path d="M1106.6 808.0 L1106.4 903.2" stroke="#ff22ff" stroke-width="1.34" />
<path d="M949.0 908.7 Q990.0 904.5 1010.0 903.4 Q1030.0 902.2 1051.0 902.4 Q1072.0 902.6 1091.8 903.2 L1111.7 903.8" stroke="#ff22ff" stroke-width="1.46"/>
<path d="M949.0 906.5 Q990.0 902.5 1010.0 901.4 Q1030.0 900.2 1051.0 900.4 Q1072.0 900.6 1091.8 901.1 L1111.7 901.6" stroke="#ff22ff" stroke-width="1.22"/>
<path d="M998.5 867.2 L1075.6 866.0" stroke="#ff1c1c" stroke-width="2.68" />
<path d="M998.5 874.8 L1075.6 874.0" stroke="#ff1c1c" stroke-width="2.68" />
<path d="M1027.0 867.0 L1027.0 874.5" stroke="#ff1c1c" stroke-width="1.59" />
<path d="M1030.5 867.0 L1030.5 874.5" stroke="#ff1c1c" stroke-width="1.59" />
<path d="M1037.0 867.0 L1037.0 874.5" stroke="#ff1c1c" stroke-width="1.59" />
<path d="M1040.5 867.0 L1040.5 874.5" stroke="#ff1c1c" stroke-width="1.59" />
<path d="M1047.0 867.0 L1047.0 874.5" stroke="#ff1c1c" stroke-width="1.59" />
<path d="M1050.0 867.0 L1050.0 874.5" stroke="#ff1c1c" stroke-width="1.59" />
<path d="M1071.0 867.0 L1071.0 874.5" stroke="#ff1c1c" stroke-width="1.59" />
<path d="M1075.0 867.0 L1075.0 874.5" stroke="#ff1c1c" stroke-width="1.59" />
<path d="M999.6 875.5 L999.6 905.0 L1001.5 912.5 L1075.6 911.0" stroke="#f6b27e" stroke-width="1.59" />
<path d="M1002.5 875.5 L1002.5 911.0" stroke="#f6b27e" stroke-width="1.46" />
<path d="M1075.6 875.0 L1075.6 911.0" stroke="#f6b27e" stroke-width="1.59" />
<path d="M1072.6 875.0 L1072.6 911.0" stroke="#f6b27e" stroke-width="1.46" />
<path d="M1070.3 875.0 L1070.3 909.0" stroke="#f6b27e" stroke-width="1.22" />
<path d="M1000.0 903.5 L1075.6 902.0" stroke="#f6b27e" stroke-width="1.46" />
<path d="M1001.5 908.0 L1075.6 906.5" stroke="#f6b27e" stroke-width="1.46" />
<path d="M999.6 876.3 L1075.6 875.5" stroke="#f6b27e" stroke-width="1.46" />
<path d="M1004.5 879.0 L1024.5 878.5 L1024.5 900.5" stroke="#d4f050" stroke-width="2.68" stroke-dasharray="1 1"/>
<path d="M1004.5 879.0 L1004.5 901.0" stroke="#d4f050" stroke-width="1.46" stroke-dasharray="1 1"/>
<path d="M1068.5 877.0 L1068.5 901.0" stroke="#d4f050" stroke-width="1.83" stroke-dasharray="1 1"/>
<path d="M1006.0 909.5 L1070.0 908.5" stroke="#d4f050" stroke-width="1.46" stroke-dasharray="1 1"/>
<path d="M1024.0 875.8 L1070.0 875.5" stroke="#d4f050" stroke-width="1.71" stroke-dasharray="1 1"/>
<path d="M1033 896 V888 Q1033 881.5 1039.5 881.5 Q1046.5 881.5 1046.5 888 V896 M1032 893 H1047.5 M1034 896.5 H1046 M1034.5 896.5 V903 M1045.5 896.5 V903" stroke="#f6b27e" stroke-width="1.3"/>
<path d="M1003 875 V862 Q1000.5 858 1001.5 855 Q1003.5 852 1006 855 Q1007 858 1005 862 V875Z" fill="#777" stroke="#777"/>
<path d="M1140.9 905.3 L1141.4 807.4 L1243.7 805.3 L1241.4 922.4" stroke="#ff22ff" stroke-width="1.46" />
<path d="M1143.5 809.5 L1241.0 807.5" stroke="#ff22ff" stroke-width="1.22" />
<path d="M1239.0 806.5 L1237.0 919.3" stroke="#ff22ff" stroke-width="1.22" />
<path d="M1143.5 809.5 L1143.0 903.0" stroke="#ff22ff" stroke-width="1.22" />
<path d="M1140.9 905.3 L1241.4 922.4" stroke="#ff22ff" stroke-width="1.46" />
<path d="M1141.0 902.0 L1239.0 919.0" stroke="#ff22ff" stroke-width="1.22" />
<path d="M1150.0 900.0 L1237.0 915.5" stroke="#ff22ff" stroke-width="1.22" />
<path d="M1149.7 806.8 L1149.7 900.6" stroke="#ff1c1c" stroke-width="1.71" />
<path d="M1153.9 806.8 L1153.9 900.6" stroke="#ff1c1c" stroke-width="1.71" />
<path d="M1151.8 806.8 L1151.8 900.6" stroke="#ff1c1c" stroke-width="1.46" />
<path d="M1163.4 806.8 L1163.4 901.4" stroke="#ff1c1c" stroke-width="1.71" />
<path d="M1166.7 806.8 L1166.7 901.4" stroke="#ff1c1c" stroke-width="1.71" />
<path d="M1165.1 806.8 L1165.1 901.4" stroke="#ff1c1c" stroke-width="1.46" />
<path d="M1185.5 806.8 L1185.5 904.5" stroke="#ff1c1c" stroke-width="1.71" />
<path d="M1188.5 806.8 L1188.5 904.5" stroke="#ff1c1c" stroke-width="1.71" />
<path d="M1187.0 806.8 L1187.0 904.5" stroke="#ff1c1c" stroke-width="1.46" />
<path d="M1205.4 806.8 L1205.4 907.6" stroke="#ff1c1c" stroke-width="1.71" />
<path d="M1208.5 806.8 L1208.5 907.6" stroke="#ff1c1c" stroke-width="1.71" />
<path d="M1207.0 806.8 L1207.0 907.6" stroke="#ff1c1c" stroke-width="1.46" />
<path d="M1223.7 806.8 L1223.7 911.5" stroke="#ff1c1c" stroke-width="1.71" />
<path d="M1227.5 806.8 L1227.5 911.5" stroke="#ff1c1c" stroke-width="1.71" />
<path d="M1225.6 806.8 L1225.6 911.5" stroke="#ff1c1c" stroke-width="1.46" />
<path d="M1149.5 832.3 L1240.0 834.5" stroke="#ff1c1c" stroke-width="3.17" />
<path d="M1135.5 897.0 L1148.0 893.0 L1148.0 889.0 L1172.0 888.5 L1172.0 896.5" stroke="#aef070" stroke-width="1.34" />
<path d="M1135.5 897.0 L1136.0 911.0 L1165.0 914.0 L1165.0 905.0 L1135.5 897.0" stroke="#aef070" stroke-width="1.34" />
<path d="M1136.0 911.0 L1150.0 907.0 L1165.0 909.5" stroke="#aef070" stroke-width="1.22" />
<path d="M1166.0 910.0 L1166.0 917.0 L1199.0 919.0 L1202.0 911.0 L1202.0 898.0 L1180.0 893.5 L1180.0 900.0" stroke="#aef070" stroke-width="1.34" />
<path d="M1166.0 910.0 L1182.0 906.5 L1202.0 908.5" stroke="#aef070" stroke-width="1.22" />
<path d="M1188.0 895.0 L1188.0 903.0 L1202.0 905.0" stroke="#aef070" stroke-width="1.22" />
<path d="M1155.0 890.0 L1155.0 898.0" stroke="#aef070" stroke-width="1.22" />
<path d="M1160.0 890.0 L1160.0 898.0" stroke="#aef070" stroke-width="1.22" />
<path d="M1220.5 922.0 L1220.5 897.0" stroke="#6e6e6e" stroke-width="2.44" />
<path d="M1220.5 905.8 L1211.5 898.3" stroke="#6e6e6e" stroke-width="2.2" />
<path d="M1220.5 903.6 L1228.5 891.0" stroke="#6e6e6e" stroke-width="2.2" />
<path d="M1220.5 907.9 L1229.5 905.4" stroke="#6e6e6e" stroke-width="1.95" />
<path d="M1220.5 907.5 L1213.5 904.1" stroke="#6e6e6e" stroke-width="1.83" />
<path d="M1220.5 909.3 L1227.0 910.2" stroke="#6e6e6e" stroke-width="1.83" />
<path d="M1220.5 904.6 L1215.5 894.5" stroke="#6e6e6e" stroke-width="1.71" />
<path d="M1220.5 906.2 L1224.5 899.6" stroke="#6e6e6e" stroke-width="1.71" />
<path d="M1220.5 906.7 L1212.5 901.5" stroke="#6e6e6e" stroke-width="1.59" />
<rect x="1216.5" y="913.4" width="8" height="8.6" fill="#757575" stroke="none"/>
</g>
</svg>
<div class="a" style="left:0;top:1002.4px;width:1919px;height:25px;background:#373737"></div>
<svg style="left:0;top:1002px" width="700" height="25" viewBox="0 1002 700 25"><defs><linearGradient id="lg" x1="0" y1="0" x2="0" y2="1"><stop offset="0" stop-color="#494949"/><stop offset="1" stop-color="#5a5a5a"/></linearGradient><linearGradient id="lga" x1="0" y1="0" x2="0" y2="1"><stop offset="0" stop-color="#5e5e5e"/><stop offset=".7" stop-color="#727272"/><stop offset="1" stop-color="#909090"/></linearGradient></defs>
<path d="M9.3 1003 C14.3 1003 14.8 1007 16.3 1012 C17.8 1018.6 17.8 1020.6 21.8 1020.6 L57.5 1020.6 C61.5 1020.6 61 1018.6 62.5 1012 C64 1007 64.5 1003 69 1003 Z" fill="url(#lg)" stroke="#333" stroke-width=".8"/>
<path d="M66 1003 C71 1003 71.5 1007 73 1012 C74.5 1018.6 74.5 1020.6 78.5 1020.6 L123.5 1020.6 C127.5 1020.6 127 1018.6 128.5 1012 C130 1007 130.5 1003 135 1003 Z" fill="url(#lga)" stroke="#333" stroke-width=".8"/>
<path d="M133 1003 C138 1003 138.5 1007 140 1012 C141.5 1018.6 141.5 1020.6 145.5 1020.6 L189.3 1020.6 C193.3 1020.6 192.8 1018.6 194.3 1012 C195.8 1007 196.3 1003 200.8 1003 Z" fill="url(#lg)" stroke="#333" stroke-width=".8"/>
<path d="M198 1003 C203 1003 203.5 1007 205 1012 C206.5 1018.6 206.5 1020.6 210.5 1020.6 L254.3 1020.6 C258.3 1020.6 257.8 1018.6 259.3 1012 C260.8 1007 261.3 1003 265.8 1003 Z" fill="url(#lg)" stroke="#333" stroke-width=".8"/>
<path d="M263 1003 C268 1003 268.5 1007 270 1012 C271.5 1018.6 271.5 1020.6 275.5 1020.6 L319.3 1020.6 C323.3 1020.6 322.8 1018.6 324.3 1012 C325.8 1007 326.3 1003 330.8 1003 Z" fill="url(#lg)" stroke="#333" stroke-width=".8"/>
<path d="M328 1003 C333 1003 333.5 1007 335 1012 C336.5 1018.6 336.5 1020.6 340.5 1020.6 L384.3 1020.6 C388.3 1020.6 387.8 1018.6 389.3 1012 C390.8 1007 391.3 1003 395.8 1003 Z" fill="url(#lg)" stroke="#333" stroke-width=".8"/>
<path d="M393 1003 C398 1003 398.5 1007 400 1012 C401.5 1018.6 401.5 1020.6 405.5 1020.6 L449.3 1020.6 C453.3 1020.6 452.8 1018.6 454.3 1012 C455.8 1007 456.3 1003 460.8 1003 Z" fill="url(#lg)" stroke="#333" stroke-width=".8"/>
<path d="M458 1003 C463 1003 463.5 1007 465 1012 C466.5 1018.6 466.5 1020.6 470.5 1020.6 L514.3 1020.6 C518.3 1020.6 517.8 1018.6 519.3 1012 C520.8 1007 521.3 1003 525.8 1003 Z" fill="url(#lg)" stroke="#333" stroke-width=".8"/>
<path d="M523 1003 C528 1003 528.5 1007 530 1012 C531.5 1018.6 531.5 1020.6 535.5 1020.6 L579.3 1020.6 C583.3 1020.6 582.8 1018.6 584.3 1012 C585.8 1007 586.3 1003 590.8 1003 Z" fill="url(#lg)" stroke="#333" stroke-width=".8"/>
<path d="M588 1003 C593 1003 593.5 1007 595 1012 C596.5 1018.6 596.5 1020.6 600.5 1020.6 L644.3 1020.6 C648.3 1020.6 647.8 1018.6 649.3 1012 C650.8 1007 651.3 1003 655.8 1003 Z" fill="url(#lg)" stroke="#333" stroke-width=".8"/>
<path d="M652.5 1003 C657.5 1003 658.0 1007 659.5 1012 C661.0 1018.6 661.0 1020.6 665.0 1020.6 L677.5 1020.6 C681.5 1020.6 681 1018.6 682.5 1012 C684 1007 684.5 1003 689 1003 Z" fill="url(#lg)" stroke="#333" stroke-width=".8"/>
<path d="M667 1012 H676 M671.5 1007.5 V1016.5" stroke="#e0e0e0" stroke-width="1.6" fill="none"/>
</svg>
<div class="t" style="left:23.3px;top:1004.0px;font-size:13px;line-height:15px;color:#c6c6c6;transform:scaleX(0.952);">Model</div>
<div class="t" style="left:80.0px;top:1004.0px;font-size:13px;line-height:15px;color:#ffffff;font-weight:bold;-webkit-text-stroke:0;transform:scaleX(0.863);">Layout1</div>
<div class="t" style="left:147.0px;top:1004.0px;font-size:13px;line-height:15px;color:#c6c6c6;transform:scaleX(0.903);">Layout2</div>
<div class="t" style="left:212.0px;top:1004.0px;font-size:13px;line-height:15px;color:#c6c6c6;transform:scaleX(0.903);">Layout3</div>
<div class="t" style="left:277.0px;top:1004.0px;font-size:13px;line-height:15px;color:#c6c6c6;transform:scaleX(0.903);">Layout4</div>
<div class="t" style="left:342.0px;top:1004.0px;font-size:13px;line-height:15px;color:#c6c6c6;transform:scaleX(0.903);">Layout5</div>
<div class="t" style="left:407.0px;top:1004.0px;font-size:13px;line-height:15px;color:#c6c6c6;transform:scaleX(0.903);">Layout6</div>
<div class="t" style="left:472.0px;top:1004.0px;font-size:13px;line-height:15px;color:#c6c6c6;transform:scaleX(0.903);">Layout7</div>
<div class="t" style="left:537.0px;top:1004.0px;font-size:13px;line-height:15px;color:#c6c6c6;transform:scaleX(0.903);">Layout8</div>
<div class="t" style="left:602.0px;top:1004.0px;font-size:13px;line-height:15px;color:#c6c6c6;transform:scaleX(0.903);">Layout9</div>
<div class="a" style="left:1310.7px;top:0;width:446.6px;height:24px;background:#a7a7a7;border-top:1px solid #8f8f8f"></div>
<div class="a" style="left:1310.7px;top:1px;width:12px;height:22px;background:#b2b2b2"></div>
<div class="a" style="left:1324.3px;top:1.7px;width:179.7px;height:21px;background:#7b7b7b;border:1px solid #4e4e4e"></div>
<div class="t" style="left:1327.7px;top:4.7px;font-size:12.5px;line-height:14px;color:#d2d2d2;font-style:italic;transform:scaleX(0.840);">Type a keyword or phrase</div>
<div class="t" style="left:1553.3px;top:4.5px;font-size:13px;line-height:15px;color:#fdfdfd;transform:scaleX(0.889);">Sign In</div>
<svg style="left:1310px;top:0" width="609" height="24" viewBox="1310 0 609 24" fill="none"><path d="M1315 7.8 L1320 11.8 L1315 15.8 Z" fill="#fff"/><g fill="#f4f4f4" stroke="#2a2a2a" stroke-width=".9"><path d="M1511 5.5 h3.6 l1 4 v9 h-6 v-9 Z M1519.4 5.5 h3.6 l1.4 4 v9 h-6 v-9 Z"/><rect x="1515.2" y="9.3" width="2.6" height="3.4"/></g><path d="M1510.6 13.2 h4 M1519.4 13.2 h4" stroke="#555" stroke-width=".8"/><path d="M1540 4.5 a3.7 4.2 0 1 1 -.01 0 Z M1533 19.5 Q1533 14.3 1537.5 13.3 Q1540 15 1542.5 13.3 Q1547 14.3 1547 19.5 Z" fill="#fff" stroke="#333" stroke-width=".9"/><path d="M1638.3 10.5 H1643.5 L1640.9 13.5 Z" fill="#f4f4f4"/><path d="M1653.5 5.5 H1656.8 L1659.5 14.5 H1667.5 L1669.8 7.8 H1658" stroke="#20507a" stroke-width="1.5"/><circle cx="1660.5" cy="17.3" r="1.5" fill="#20507a"/><circle cx="1666.5" cy="17.3" r="1.5" fill="#20507a"/><path d="M1686.6 4.5 L1694.3 17.3 H1679 Z" stroke="#20507a" stroke-width="1.5" stroke-linejoin="round"/><path d="M1683 13.2 L1686.6 10.5 L1690.3 13.2" stroke="#20507a" stroke-width="1.3"/><path d="M1699.3 10.5 H1704.3 L1701.8 13.5 Z" fill="#f4f4f4"/><path d="M1713.5 3 V21" stroke="#8f8f8f"/><circle cx="1732.5" cy="12" r="7.3" fill="#f6f6f6" stroke="#333" stroke-width="1"/><text x="1729.3" y="16.3" font-family="Liberation Sans" font-size="12" font-weight="bold" fill="#20306a">?</text><path d="M1747.3 10.5 H1752.3 L1749.8 13.5 Z" fill="#f4f4f4"/><path d="M1799.5 11.5 H1810" stroke="#f4f4f4" stroke-width="1.2"/><path d="M1847.5 8.5 V6.5 H1855.5 V14 H1853.5" stroke="#f4f4f4" stroke-width="1.1"/><rect x="1845.5" y="8.5" width="8" height="7.5" stroke="#f4f4f4" stroke-width="1.1"/><path d="M1890.3 6.2 L1900.5 16.2 M1900.5 6.2 L1890.3 16.2" stroke="#f4f4f4" stroke-width="1.3"/></svg>
<svg style="left:1455px;top:1002px" width="464" height="25" viewBox="1455 1002 464 25" fill="none"><rect x="1461.8" y="1003.3" width="458" height="24" fill="#5c5c5c"/><rect x="1463.3" y="1004.6" width="456" height="23" fill="#4f4f4f" stroke="#707070" stroke-width="1"/><rect x="1503.3999999999999" y="1004.1" width="4.4" height="23" fill="#707070"/><rect x="1504.3999999999999" y="1003.3" width="2.4" height="24" fill="#5c5c5c"/><rect x="1608.3999999999999" y="1004.1" width="2.6" height="23" fill="#707070"/><rect x="1609.3999999999999" y="1003.3" width="0.6000000000000001" height="24" fill="#5c5c5c"/><rect x="1672.1" y="1004.1" width="4.4" height="23" fill="#707070"/><rect x="1673.1" y="1003.3" width="2.4" height="24" fill="#5c5c5c"/><rect x="1747.3999999999999" y="1004.1" width="4.2" height="23" fill="#707070"/><rect x="1748.3999999999999" y="1003.3" width="2.1999999999999997" height="24" fill="#5c5c5c"/><rect x="1789.4999999999998" y="1004.1" width="2.6" height="23" fill="#707070"/><rect x="1790.4999999999998" y="1003.3" width="0.6000000000000001" height="24" fill="#5c5c5c"/><rect x="1815.2999999999997" y="1004.1" width="2.6" height="23" fill="#707070"/><rect x="1816.2999999999997" y="1003.3" width="0.6000000000000001" height="24" fill="#5c5c5c"/><rect x="1841.1" y="1004.1" width="4.2" height="23" fill="#707070"/><rect x="1842.1" y="1003.3" width="2.1999999999999997" height="24" fill="#5c5c5c"/><rect x="1866.1999999999998" y="1004.1" width="4.2" height="23" fill="#707070"/><rect x="1867.1999999999998" y="1003.3" width="2.1999999999999997" height="24" fill="#5c5c5c"/><rect x="1532.4" y="1005.5" width="21.199999999999818" height="21.5" fill="#5a8fc8"/><rect x="1611" y="1005.5" width="21.700000000000045" height="21.5" fill="#5a8fc8"/><rect x="1635.5" y="1005.5" width="21.200000000000045" height="21.5" fill="#5a8fc8"/><path d="M1512.3 1008 V1023.5 H1526 M1512.3 1017.5 H1518.3 V1023.5" stroke="#f0f0f0" stroke-width="1.2"/><circle cx="1542.3" cy="1016.3" r="6.7" stroke="#f0f0f0" stroke-width="1.3"/><path d="M1542.3 1017.6 H1550.8 M1542.3 1017.6 L1549.5 1010.3" stroke="#f0f0f0" stroke-width="1.3"/><path d="M1559.7 1014.8 H1566.1000000000001 L1562.9 1018.6 Z" fill="#f0f0f0"/><path d="M1598.3999999999999 1014.8 H1604.8 L1601.6 1018.6 Z" fill="#f0f0f0"/><path d="M1662.1 1014.8 H1668.5 L1665.3 1018.6 Z" fill="#f0f0f0"/><path d="M1779.3999999999999 1014.8 H1785.8 L1782.6 1018.6 Z" fill="#f0f0f0"/><path d="M1582 1007 V1025" stroke="#38c838" stroke-width="1.3"/><path d="M1575 1008.5 L1589.5 1024.5" stroke="#e83838" stroke-width="1.3"/><circle cx="1582" cy="1016.5" r="1.6" fill="#333" stroke="#f0f0f0" stroke-width=".9"/><path d="M1614.5 1022.6 H1630 M1614.5 1022.6 L1626 1011" stroke="#f0f0f0" stroke-width="1.4"/><rect x="1619.6" y="1015.2" width="2.6" height="2.6" fill="#f0f0f0"/><rect x="1640.8" y="1011.3" width="12.5" height="12.7" stroke="#f0f0f0" stroke-width="1.4"/><rect x="1638.2" y="1008.8" width="4.6" height="4.6" fill="#5a8fc8" stroke="#f0f0f0" stroke-width="1.2"/><rect x="1680" y="1008" width="16.5" height="16.5" stroke="#f0f0f0" stroke-width="1.2" stroke-dasharray="3.5 2.2"/><rect x="1685" y="1015" width="8" height="6.5" stroke="#f0f0f0" stroke-width="1.1"/><rect x="1683.3" y="1011.3" width="4.5" height="3.7" stroke="#f0f0f0" stroke-width="1"/><path d="M1710.3 1008 L1711.8 1017.5 L1717.3 1024.5 L1710.8 1020.8 L1710.3 1024 L1709.8 1020.8 L1703.3 1024.5 L1708.8 1017.5 Z" fill="#d8d8d8"/><circle cx="1718" cy="1010.5" r="1.8" stroke="#f0f0f0" stroke-width="1"/><path d="M1733.8 1008 L1735.3 1017.5 L1740.8 1024.5 L1734.3 1020.8 L1733.8 1024 L1733.3 1020.8 L1726.8 1024.5 L1732.3 1017.5 Z" fill="#d8d8d8"/><path d="M1742.5 1007 L1739.5 1012 H1742 L1739.8 1016.5" stroke="#f0f0f0" stroke-width="1.1"/><path d="M1768.0 1014.9 L1770.5 1014.9 L1770.5 1017.7 L1768.0 1017.7 L1767.4 1019.1 L1769.1 1020.9 L1767.2 1022.8 L1765.4 1021.1 L1764.0 1021.7 L1764.0 1024.2 L1761.2 1024.2 L1761.2 1021.7 L1759.8 1021.1 L1758.0 1022.8 L1756.1 1020.9 L1757.8 1019.1 L1757.2 1017.7 L1754.7 1017.7 L1754.7 1014.9 L1757.2 1014.9 L1757.8 1013.5 L1756.1 1011.7 L1758.0 1009.8 L1759.8 1011.5 L1761.2 1010.9 L1761.2 1008.4 L1764.0 1008.4 L1764.0 1010.9 L1765.4 1011.5 L1767.2 1009.8 L1769.1 1011.7 L1767.4 1013.5Z" fill="#dcdcdc"/><circle cx="1762.6" cy="1016.3" r="2.4" fill="#333"/><path d="M1795 1016.3 H1810.8 M1802.9 1008.5 V1024.3" stroke="#f0f0f0" stroke-width="1.5"/><rect x="1822.5" y="1007.5" width="5.5" height="5.5" stroke="#f0f0f0" stroke-width="1.1"/><circle cx="1833.8" cy="1013.5" r="2.8" stroke="#f0f0f0" stroke-width="1.1"/><path d="M1825 1022.5 L1828 1017.5 L1831 1022.5 Z" stroke="#f0f0f0" stroke-width="1"/><path d="M1849 1008 H1858 L1862 1012 V1021 H1849 Z" fill="#4aa0e0"/><path d="M1849 1017 H1862 V1022.5 H1849Z" fill="#e8c050"/><path d="M1852 1008 V1021 M1849 1013 H1862" stroke="#fff" stroke-width="1.2"/><circle cx="1852" cy="1013" r="1.6" fill="#fff"/><path d="M1856.5 1020.5 L1859 1023 L1864 1017.5" stroke="#6a9a50" stroke-width="1.5"/><rect x="1873.3" y="1009" width="16.8" height="14.5" stroke="#f0f0f0" stroke-width="1.1"/><path d="M1876.5 1020.5 L1881 1016.5 M1876.5 1020.5 v-3.2 M1876.5 1020.5 h3.2 M1887 1012 L1882.5 1016 M1887 1012 v3.2 M1887 1012 h-3.2" stroke="#f0f0f0" stroke-width="1.1"/><path d="M1898.5 1010.3 H1914 M1898.5 1016.3 H1914 M1898.5 1022.3 H1914" stroke="#f0f0f0" stroke-width="1.6"/></svg>
<div class="t" style="left:1467.5px;top:1009.7px;font-size:12.5px;line-height:14px;color:#f4f4f4;transform:scaleX(0.813);">PAPER</div>
<div class="a" style="left:463px;top:918px;width:788px;height:15px;background:rgba(110,110,110,.82);border-radius:2.5px"></div>
<div class="a" style="left:463px;top:938.3px;width:60px;height:15px;background:rgba(108,108,108,.95);border-radius:2.5px"></div>
<div class="a" style="left:463px;top:958.3px;width:60px;height:15px;background:rgba(108,108,108,.95);border-radius:2.5px"></div>
<div class="t" style="left:465.3px;top:919.4px;font-size:11.8px;line-height:14px;color:#f4f4f4;font-family:'Liberation Mono',monospace;-webkit-text-stroke:.05px currentColor;transform:scaleX(0.988);">Autodesk DWG.  This file is a TrustedDWG last saved by an Autodesk application or Autodesk licensed application.</div>
<div class="t" style="left:465.3px;top:939.4px;font-size:11.8px;line-height:14px;color:#ffffff;font-family:'Liberation Mono',monospace;-webkit-text-stroke:.05px currentColor;transform:scaleX(0.992);">Command:</div>
<div class="t" style="left:465.3px;top:959.4px;font-size:11.8px;line-height:14px;color:#ffffff;font-family:'Liberation Mono',monospace;-webkit-text-stroke:.05px currentColor;transform:scaleX(0.992);">Command:</div>
<div class="a" style="left:403.3px;top:976.3px;width:53.4px;height:25.2px;background:linear-gradient(rgba(128,128,128,.92),rgba(112,112,112,.92));border-radius:3px 0 0 3px"></div>
<div class="a" style="left:456.7px;top:976.3px;width:1060.5px;height:25.4px;background:rgba(255,255,255,.9);border:1px solid #a2a2a2;border-left:none;border-radius:0 2px 0 0"></div>
<svg style="left:400px;top:975px" width="1120" height="28" viewBox="400 975 1120 28" fill="none"><g fill="#b8a8a8"><rect x="407.6" y="980.5" width="1.2" height="1.6"/><rect x="407.6" y="983.1" width="1.2" height="1.6"/><rect x="407.6" y="985.7" width="1.2" height="1.6"/><rect x="407.6" y="988.3" width="1.2" height="1.6"/><rect x="407.6" y="990.9" width="1.2" height="1.6"/><rect x="407.6" y="993.5" width="1.2" height="1.6"/><rect x="407.6" y="996.1" width="1.2" height="1.6"/><rect x="410.2" y="980.5" width="1.2" height="1.6"/><rect x="410.2" y="983.1" width="1.2" height="1.6"/><rect x="410.2" y="985.7" width="1.2" height="1.6"/><rect x="410.2" y="988.3" width="1.2" height="1.6"/><rect x="410.2" y="990.9" width="1.2" height="1.6"/><rect x="410.2" y="993.5" width="1.2" height="1.6"/><rect x="410.2" y="996.1" width="1.2" height="1.6"/></g><path d="M419 984.5 L427 993 M427 984.5 L419 993" stroke="#fff" stroke-width="2"/><path d="M444.5 988 L450.4 994.4" stroke="#4a4a4a" stroke-width="4.4" stroke-linecap="round"/><circle cx="442.9" cy="986.3" r="4.2" fill="#4a4a4a"/><path d="M444.5 988 L450.4 994.4" stroke="#fff" stroke-width="2.9" stroke-linecap="round"/><circle cx="442.9" cy="986.3" r="3.5" fill="#fff"/><path d="M443.6 985.2 L440.2 981.8 L438.3 983.7 L441.7 987.1 Z" fill="#7d7d7d"/><rect x="462.6" y="982.4" width="14.2" height="12.6" rx="1" fill="#f4f0f0" stroke="#b9a9a9" stroke-width="1"/><path d="M465.3 985.5 L469.3 988.7 L465.3 992 M470.5 992.3 H474.2" stroke="#5a5a5a" stroke-width="1.2"/><path d="M481 986.3 H486.2 L483.6 989.4 Z" fill="#8a8a8a"/><path d="M1504.3 991.2 L1508 987.3 L1511.7 991.2 Z" fill="#777"/></svg>
<div class="t" style="left:494.2px;top:982.4px;font-size:11.8px;line-height:14px;color:#b4abab;font-family:'Liberation Mono',monospace;font-style:italic;-webkit-text-stroke:0;transform:scaleX(0.974);">Type a command</div>
<svg style="left:10px;top:895px" width="65" height="100" viewBox="10 895 65 100" fill="none" stroke="#1c1ce8" stroke-width="1.1"><path d="M16.3 899.3 V986.3"/><path d="M16.3 899.3 L66.3 986.3 H16.3" stroke-dasharray="2 1.2"/><path d="M16.3 978.3 H24.3 V986.3"/><path d="M18 925 L24.3 931.3 L31.3 925 M24.3 931.3 V937.5"/><path d="M44.5 972 L57 984.5 M57 972 L44.5 984.5"/></svg>
<svg style="left:1846px;top:179px" width="60" height="18" viewBox="1846 179 60 18" fill="none"><rect x="1850.8" y="188.3" width="10.4" height="3" fill="#f4f4f4" stroke="#333" stroke-width=".8"/><path d="M1873.5 183.3 H1880.5 V190 " stroke="#333" stroke-width="3"/><path d="M1873.5 183.3 H1880.5 V190" stroke="#f4f4f4" stroke-width="1.5"/><rect x="1871.2" y="185.8" width="6.8" height="6.6" fill="none" stroke="#333" stroke-width="3.2"/><rect x="1871.2" y="185.8" width="6.8" height="6.6" fill="#8a8a8a" stroke="#f4f4f4" stroke-width="1.7"/><path d="M1891.3 184.3 L1899.8 192 M1899.8 184.3 L1891.3 192" stroke="#333" stroke-width="3.6"/><path d="M1891.3 184.3 L1899.8 192 M1899.8 184.3 L1891.3 192" stroke="#f4f4f4" stroke-width="2"/></svg>
<div class="a" style="left:1874.6px;top:432.9px;width:34.4px;height:133.5px;background:#9c9c9c;border:2px solid #737373;border-radius:5px"></div>
<svg style="left:1874px;top:432px" width="36" height="136" viewBox="1874 432 36 136" fill="none" stroke="#8b8b8b" stroke-width="1.2"><path d="M1877 444.5 H1907" stroke="#909090"/><circle cx="1901.8" cy="439" r="2.8"/><path d="M1900 437.2 L1903.6 440.8 M1903.6 437.2 L1900 440.8" stroke-width=".9"/><path d="M1881 455.5 Q1881 453.5 1883 453.5 H1895 Q1898 453.5 1898 456.5 V466 Q1898 473 1891 473 Q1880.5 473 1880.5 463 Z"/><circle cx="1889" cy="463" r="5"/><text x="1893.5" y="476.5" font-family="Liberation Sans" font-size="8.5" font-weight="bold" fill="#8b8b8b" stroke="none">2D</text><path d="M1878 480.5 H1906" stroke="#8e8e8e" stroke-dasharray="1.5 1"/><path d="M1884.5 497 L1881 492.5 Q1880 490.5 1882 490 Q1883.5 490 1885 492 L1886.5 494 V485.5 Q1887.5 483.5 1888.8 485.5 V492 V483.5 Q1890 481.8 1891.3 483.5 V492 V484.5 Q1892.5 483 1893.8 484.5 V492.5 V487.5 Q1895 486 1896.3 487.5 V498 Q1896 503 1893 506 H1886.5 Q1884.5 501 1884.5 497Z"/><path d="M1879 512 L1891 524 M1891 512 L1879 524 M1879 512 h3.5 M1879 512 v3.5 M1891 512 h-3.5 M1891 512 v3.5 M1879 524 h3.5 M1879 524 v-3.5"/><circle cx="1895.5" cy="527.5" r="4.2"/><path d="M1898.5 530.5 L1902.5 534.5" stroke-width="2.2"/><path d="M1888.5 542.8 H1894.5 L1891.5 546 Z" fill="#8b8b8b" stroke="none"/><circle cx="1901.8" cy="560" r="2.8"/><path d="M1900 559.2 H1903.6 M1900.3 560.8 L1901.8 562 L1903.3 560.8" stroke-width=".9"/></svg>
<svg style="left:1525px;top:898px" width="394" height="125" viewBox="1525 898 394 125"><path d="M1539.5 902.5 H1912 Q1921 902.5 1921 912.5 V987.3 Q1921 997.3 1911 997.3 H1829.4 L1841.9 1016.8 L1809.4 997.3 H1539.5 Q1529.5 997.3 1529.5 987.3 V912.5 Q1529.5 902.5 1539.5 902.5 Z" fill="#ffffe1" stroke="#101010" stroke-width="1"/><rect x="1896.5" y="912.5" width="15.3" height="15" fill="#fff" stroke="#8a8a8a" stroke-width="1"/><path d="M1900.3 916.3 L1908 923.7 M1908 916.3 L1900.3 923.7" stroke="#111" stroke-width="2" fill="none"/></svg>
<div class="t" style="left:1549.0px;top:912.4px;font-size:13px;line-height:15px;color:#111;font-weight:bold;-webkit-text-stroke:0;transform:scaleX(0.903);">3D Display Performance Notification</div>
<div class="t" style="left:1545.3px;top:934.9px;font-size:12.5px;line-height:14px;color:#111;transform:scaleX(0.941);">Enhanced 3D performance is not available for the current visual style.</div>
<div class="t" style="left:1545.3px;top:949.8px;font-size:12.5px;line-height:14px;color:#111;transform:scaleX(0.926);">The required settings are listed here:</div>
<div class="t" style="left:1545.3px;top:970.5px;font-size:12.5px;line-height:14px;color:#1414ee;transform:scaleX(0.875);text-decoration:underline;">VISUALSTYLES Command</div>
</body></html>
